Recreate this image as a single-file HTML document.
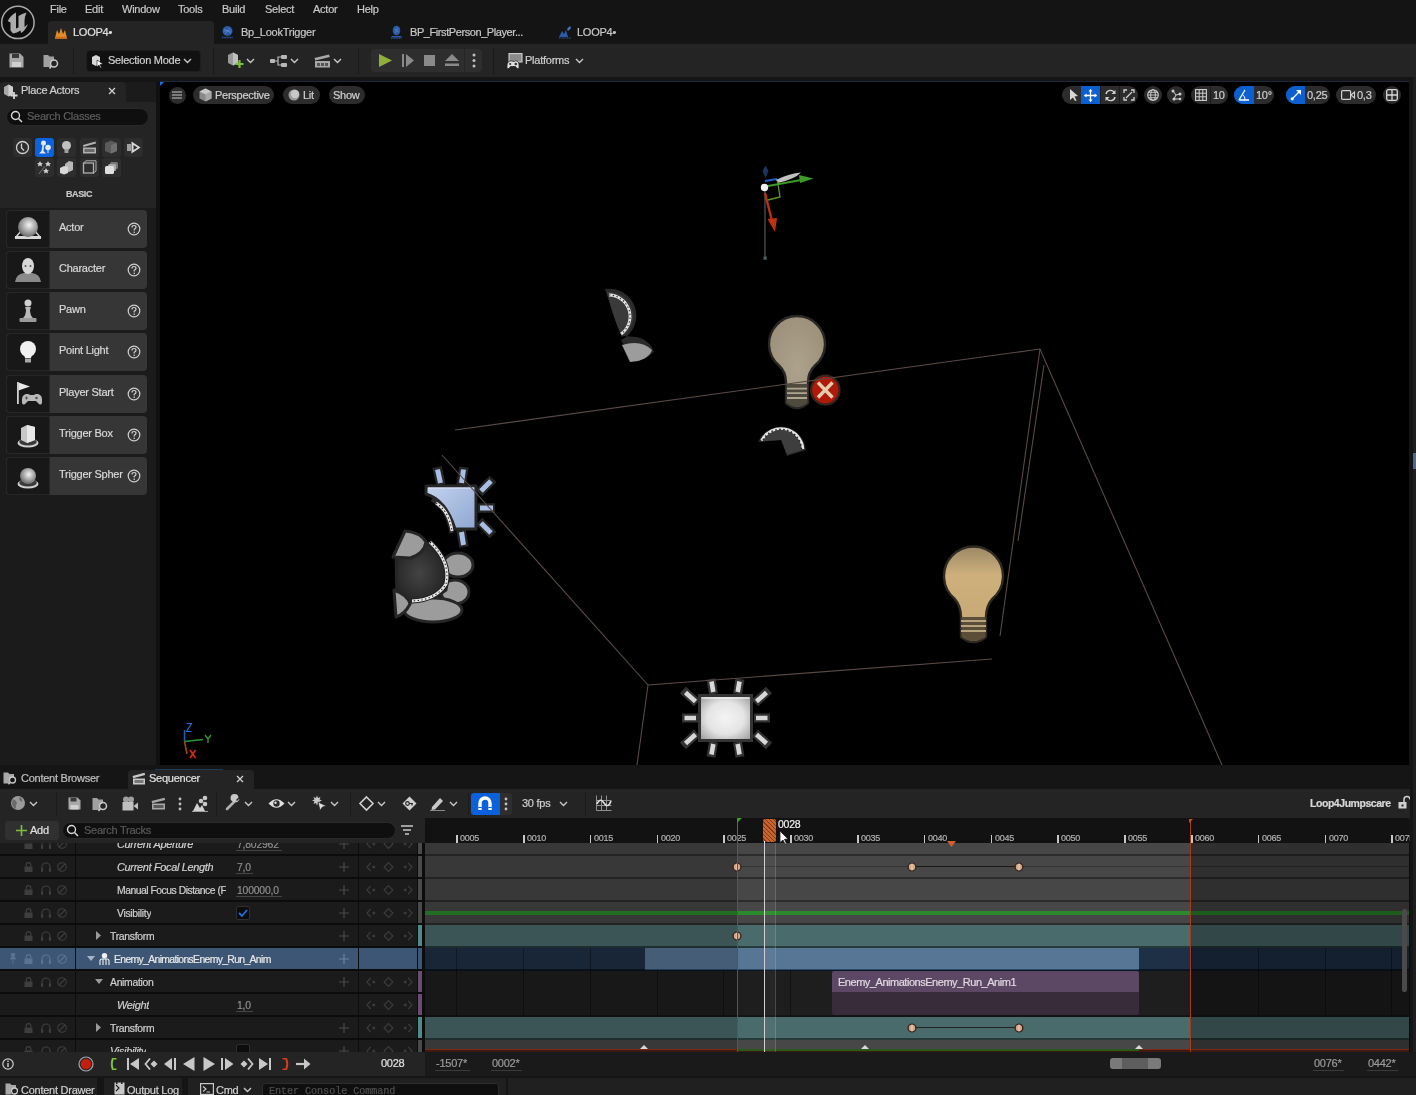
<!DOCTYPE html>
<html><head><meta charset="utf-8">
<style>
*{margin:0;padding:0;box-sizing:border-box}
html,body{width:1416px;height:1095px;overflow:hidden;background:#151515;font-family:"Liberation Sans",sans-serif;color:#c0c0c0;-webkit-font-smoothing:antialiased}
.t{will-change:transform;-webkit-text-stroke:0.2px currentColor}
.a{position:absolute}
.t{position:absolute;white-space:nowrap;font-size:11px;line-height:13px;letter-spacing:-0.25px}
svg{position:absolute;overflow:visible}
</style></head><body>

<!-- ============ MENU BAR ============ -->
<div class="a" style="left:0;top:0;width:1416px;height:44px;background:#141414"></div>
<svg style="left:0;top:0" width="40" height="44" viewBox="0 0 40 44">
 <circle cx="17.9" cy="22.4" r="16.2" fill="#0e0e0e" stroke="#a8a8a8" stroke-width="1.5"/>
 <path d="M7.7 21 Q11 15 16 12.6 V28.5 L18.5 27.5 V16 Q22 14 26.5 12.6 Q24.5 17 24.5 21 V27 L28 24 Q25 31 21 33 L20.5 30.5 Q17 33 13 33.4 L10.5 30.5 V22.5 Z" fill="#ababab"/>
</svg>
<div class="t" style="left:50px;top:3px;color:#c8c8c8">File</div>
<div class="t" style="left:85px;top:3px;color:#c8c8c8">Edit</div>
<div class="t" style="left:122px;top:3px;color:#c8c8c8">Window</div>
<div class="t" style="left:178px;top:3px;color:#c8c8c8">Tools</div>
<div class="t" style="left:222px;top:3px;color:#c8c8c8">Build</div>
<div class="t" style="left:265px;top:3px;color:#c8c8c8">Select</div>
<div class="t" style="left:313px;top:3px;color:#c8c8c8">Actor</div>
<div class="t" style="left:357px;top:3px;color:#c8c8c8">Help</div>

<!-- doc tabs -->
<div class="a" style="left:48px;top:21px;width:166px;height:23px;background:#242424;border-radius:4px 4px 0 0"></div>
<svg style="left:54px;top:26px" width="14" height="14" viewBox="0 0 14 14"><path d="M1 12 L3 4 L5 8 L7 2 L9 8 L11 4 L13 12Z" fill="#e08a2a"/><rect x="1" y="11" width="12" height="2" fill="#c86a1a"/></svg>
<div class="t" style="left:73px;top:26px;color:#e0e0e0">LOOP4•</div>
<svg style="left:221px;top:25px" width="13" height="14" viewBox="0 0 13 14"><circle cx="6.5" cy="6" r="5" fill="#2a5aa8"/><path d="M3 4 L10 8 M4 9 L9 3 M2.5 6 H10.5" stroke="#5a8ad0" stroke-width="0.8"/><path d="M1 12.5 H12" stroke="#2a5aa8" stroke-width="1.5" stroke-dasharray="1 0.6"/></svg>
<div class="t" style="left:241px;top:26px;color:#c8c8c8">Bp_LookTrigger</div>
<svg style="left:390px;top:25px" width="13" height="14" viewBox="0 0 13 14"><ellipse cx="6.5" cy="5.5" rx="3.8" ry="4.8" fill="#2a5aa8"/><path d="M4.5 4 L8.5 7 M5 8 L8 3" stroke="#5a8ad0" stroke-width="0.8"/><path d="M2 11 H11 L12 12.5 H1Z" fill="#2a5aa8"/><path d="M1 13.3 H12" stroke="#2a5aa8" stroke-width="1" stroke-dasharray="1 0.6"/></svg>
<div class="t" style="left:410px;top:26px;color:#c8c8c8;letter-spacing:-0.42px">BP_FirstPerson_Player...</div>
<svg style="left:558px;top:25px" width="14" height="14" viewBox="0 0 14 14"><path d="M1 12 L4 6 L6 9 L8 5 L10 12Z" fill="#2a5aa8"/><path d="M9 4 L12 1 L13 3 L10 6Z" fill="#4a7ac8"/><path d="M1 13 H13" stroke="#2a5aa8" stroke-width="1.2" stroke-dasharray="1 0.6"/></svg>
<div class="t" style="left:577px;top:26px;color:#c8c8c8">LOOP4•</div>

<!-- ============ TOOLBAR ============ -->
<div class="a" style="left:0;top:44px;width:1416px;height:33px;background:#242424"></div>

<!-- floppy -->
<svg style="left:9px;top:53px" width="15" height="15" viewBox="0 0 15 15"><path d="M0.5 0.5 H11 L14.5 4 V14.5 H0.5Z" fill="#a8a8a8"/><rect x="3" y="1" width="7" height="4" fill="#3a3a3a"/><rect x="3" y="9" width="9" height="5" fill="#d0d0d0"/></svg>
<!-- folder search -->
<svg style="left:43px;top:53px" width="18" height="17" viewBox="0 0 18 17"><path d="M0.5 2 H5 L6.5 3.5 H11 V7 A5 5 0 0 0 8 14 H0.5Z" fill="#a0a0a0"/><circle cx="11" cy="10.5" r="3.5" fill="none" stroke="#c8c8c8" stroke-width="1.5"/><path d="M8.5 13 L6.5 15.5" stroke="#c8c8c8" stroke-width="1.6"/></svg>
<div class="a" style="left:73px;top:48px;width:1px;height:26px;background:#1a1a1a"></div>
<!-- selection mode -->
<div class="a" style="left:86px;top:50px;width:115px;height:22px;background:#111111;border-radius:4px;border:1px solid #1e1e1e"></div>
<svg style="left:91px;top:54px" width="13" height="14" viewBox="0 0 13 14"><path d="M1 3 L5 1 L9 3 V10 L5 12 L1 10Z" fill="#d8d8d8"/><path d="M6 6 L12 10 L9 10.5 L10.5 13.5 L9.5 14 L8 11 L6 13Z" fill="#fff" stroke="#111" stroke-width="0.6"/></svg>
<div class="t" style="left:108px;top:54px;color:#d0d0d0">Selection Mode</div>
<svg style="left:183px;top:58px" width="9" height="6" viewBox="0 0 9 6"><path d="M1 1 L4.5 4.5 L8 1" fill="none" stroke="#c8c8c8" stroke-width="1.4"/></svg>
<div class="a" style="left:213px;top:48px;width:1px;height:26px;background:#1a1a1a"></div>
<!-- add actor -->
<svg style="left:227px;top:52px" width="18" height="17" viewBox="0 0 18 17"><path d="M1 3 L6 0.5 L11 3 V11 L6 13.5 L1 11Z" fill="#9a9a9a"/><path d="M6 0.5 L11 3 V11 L6 13.5Z" fill="#c0c0c0"/><path d="M12.5 8 V16 M8.5 12 H16.5" stroke="#7cc03a" stroke-width="2.2"/></svg>
<svg style="left:246px;top:58px" width="9" height="6" viewBox="0 0 9 6"><path d="M1 1 L4.5 4.5 L8 1" fill="none" stroke="#c8c8c8" stroke-width="1.4"/></svg>
<!-- blueprint -->
<svg style="left:270px;top:55px" width="19" height="12" viewBox="0 0 19 12"><rect x="0" y="4" width="5" height="4" rx="1" fill="#b8b8b8"/><rect x="11" y="0" width="6" height="4" rx="1" fill="#b8b8b8"/><rect x="11" y="8" width="6" height="4" rx="1" fill="#b8b8b8"/><path d="M5 6 H8 V2 H11 M8 6 V10 H11" fill="none" stroke="#b8b8b8" stroke-width="1.2"/></svg>
<svg style="left:290px;top:58px" width="9" height="6" viewBox="0 0 9 6"><path d="M1 1 L4.5 4.5 L8 1" fill="none" stroke="#c8c8c8" stroke-width="1.4"/></svg>
<!-- cinematics -->
<svg style="left:314px;top:53px" width="17" height="15" viewBox="0 0 17 15"><path d="M0.5 5 L15 1.5 L15.8 4 L1.3 7.5Z" fill="#a8a8a8"/><rect x="1" y="8" width="15" height="6.5" fill="#a8a8a8"/><rect x="3" y="10" width="3" height="3" fill="#555"/><rect x="7" y="10" width="3" height="3" fill="#555"/><rect x="11" y="10" width="3" height="3" fill="#555"/></svg>
<svg style="left:333px;top:58px" width="9" height="6" viewBox="0 0 9 6"><path d="M1 1 L4.5 4.5 L8 1" fill="none" stroke="#c8c8c8" stroke-width="1.4"/></svg>
<div class="a" style="left:358px;top:48px;width:1px;height:26px;background:#1a1a1a"></div>
<!-- play group -->
<div class="a" style="left:371px;top:49px;width:111px;height:23px;background:#2e2e2e;border-radius:4px"></div>
<div class="a" style="left:464px;top:49px;width:1px;height:23px;background:#252525"></div>
<svg style="left:378px;top:53px" width="15" height="15" viewBox="0 0 15 15"><path d="M1 1 L14 7.5 L1 14Z" fill="#8fb13c"/></svg>
<svg style="left:402px;top:54px" width="12" height="13" viewBox="0 0 12 13"><rect x="0" y="0" width="2" height="13" fill="#8a8a8a"/><path d="M4 0 L12 6.5 L4 13Z" fill="#8a8a8a"/></svg>
<div class="a" style="left:424px;top:55px;width:11px;height:11px;background:#8a8a8a"></div>
<svg style="left:445px;top:54px" width="14" height="13" viewBox="0 0 14 13"><path d="M7 0 L14 7 H0Z" fill="#8a8a8a"/><rect x="0" y="9.5" width="14" height="2.5" fill="#8a8a8a"/></svg>
<svg style="left:472px;top:53px" width="4" height="15" viewBox="0 0 4 15"><circle cx="2" cy="2" r="1.5" fill="#c0c0c0"/><circle cx="2" cy="7.5" r="1.5" fill="#c0c0c0"/><circle cx="2" cy="13" r="1.5" fill="#c0c0c0"/></svg>
<div class="a" style="left:493px;top:48px;width:1px;height:26px;background:#1a1a1a"></div>
<!-- platforms -->
<svg style="left:506px;top:53px" width="17" height="17" viewBox="0 0 17 17"><rect x="3" y="0.6" width="13" height="8.4" fill="#8a8a8a" stroke="#d0d0d0" stroke-width="1.1"/><path d="M1 14.5 Q0.5 9 4 8 Q6.5 7.5 7 8.5 H8.5 Q9 7.5 11 8 Q13.5 9 13 14.5 Q12.5 16.2 11 15.5 L9.5 13.5 H4.5 L3 15.5 Q1.5 16.2 1 14.5Z" fill="#e0e0e0" stroke="#242424" stroke-width="0.8"/><circle cx="4.2" cy="11" r="1.1" fill="#333"/><circle cx="9.8" cy="11" r="1.3" fill="#333"/></svg>
<div class="t" style="left:525px;top:54px;color:#d0d0d0">Platforms</div>
<svg style="left:575px;top:58px" width="9" height="6" viewBox="0 0 9 6"><path d="M1 1 L4.5 4.5 L8 1" fill="none" stroke="#c8c8c8" stroke-width="1.4"/></svg>


<!-- ============ LEFT PANEL ============ -->
<div class="a" style="left:0;top:82px;width:156px;height:683px;background:#1b1b1b"></div>
<div class="a" style="left:0;top:82px;width:126px;height:20px;background:#242424;border-radius:4px 4px 0 0"></div>
<svg style="left:3px;top:84px" width="15" height="16" viewBox="0 0 15 16"><path d="M1 3 L5.5 0.5 L10 3 V10 L5.5 12.5 L1 10Z" fill="#a8a8a8"/><path d="M5.5 0.5 L10 3 V10 L5.5 12.5Z" fill="#d0d0d0"/><path d="M11 8 V15 M7.5 11.5 H14.5" stroke="#d8d8d8" stroke-width="1.8"/></svg>
<div class="t" style="left:21px;top:84px;color:#d0d0d0">Place Actors</div>
<svg style="left:108px;top:87px" width="8" height="8" viewBox="0 0 8 8"><path d="M1 1 L7 7 M7 1 L1 7" stroke="#d0d0d0" stroke-width="1.3"/></svg>
<div class="a" style="left:0;top:102px;width:156px;height:106px;background:#242424"></div>
<div class="a" style="left:6px;top:108px;width:143px;height:18px;background:#0f0f0f;border-radius:9px;border:1px solid #2a2a2a"></div>
<svg style="left:10px;top:110px" width="13" height="13" viewBox="0 0 13 13"><circle cx="5.5" cy="5.5" r="4" fill="none" stroke="#d8d8d8" stroke-width="1.4"/><path d="M8.5 8.5 L12 12" stroke="#d8d8d8" stroke-width="1.5"/></svg>
<div class="t" style="left:27px;top:110px;color:#5e5e5e">Search Classes</div>
<div class="a" style="left:13px;top:138px;width:19px;height:19px;background:#2d2d2d;border-radius:3px"></div>
<div class="a" style="left:35px;top:138px;width:19px;height:19px;background:#0b62dc;border-radius:3px"></div>
<div class="a" style="left:57px;top:138px;width:19px;height:19px;background:#2d2d2d;border-radius:3px"></div>
<div class="a" style="left:80px;top:138px;width:19px;height:19px;background:#2d2d2d;border-radius:3px"></div>
<div class="a" style="left:102px;top:138px;width:19px;height:19px;background:#2d2d2d;border-radius:3px"></div>
<div class="a" style="left:124px;top:138px;width:19px;height:19px;background:#2d2d2d;border-radius:3px"></div>
<div class="a" style="left:35px;top:158px;width:19px;height:19px;background:#2d2d2d;border-radius:3px"></div>
<div class="a" style="left:57px;top:158px;width:19px;height:19px;background:#2d2d2d;border-radius:3px"></div>
<div class="a" style="left:80px;top:158px;width:19px;height:19px;background:#2d2d2d;border-radius:3px"></div>
<div class="a" style="left:102px;top:158px;width:19px;height:19px;background:#2d2d2d;border-radius:3px"></div>

<svg style="left:15px;top:140px" width="15" height="15" viewBox="0 0 15 15"><circle cx="7.5" cy="7.5" r="6" fill="none" stroke="#d0d0d0" stroke-width="1.3"/><path d="M6.5 3.5 V8 L9 10.5" fill="none" stroke="#d0d0d0" stroke-width="1.3"/></svg>
<svg style="left:37px;top:140px" width="15" height="15" viewBox="0 0 15 15"><circle cx="6.5" cy="3" r="2.5" fill="#e8e8e8"/><path d="M5.5 5 L4.5 11 L2 13.5 H9 L6.5 11 L7 5Z" fill="#e8e8e8"/><circle cx="11" cy="7.5" r="2.8" fill="#e8e8e8"/><rect x="10.5" y="10" width="1" height="3" fill="#e8e8e8"/></svg>
<svg style="left:60px;top:140px" width="13" height="15" viewBox="0 0 13 15"><circle cx="6.5" cy="5.5" r="4.5" fill="#c0c0c0"/><rect x="4.5" y="9" width="4" height="4" fill="#a0a0a0"/></svg>
<svg style="left:82px;top:141px" width="15" height="13" viewBox="0 0 15 13"><path d="M1 4 L13.5 0.5 L14 2.5 L1.5 6Z" fill="#b0b0b0"/><rect x="1" y="6.5" width="13" height="6" fill="#b0b0b0"/><rect x="2.5" y="8" width="10" height="3" fill="#6a6a6a"/></svg>
<svg style="left:104px;top:140px" width="14" height="14" viewBox="0 0 14 14"><path d="M1 3 L7 0.5 L13 3 V11 L7 13.5 L1 11Z" fill="#5a5a5a"/><path d="M7 5 L13 3 V11 L7 13.5Z" fill="#707070"/></svg>
<svg style="left:127px;top:141px" width="14" height="13" viewBox="0 0 14 13"><rect x="0" y="3" width="4" height="7" fill="#a0a0a0"/><path d="M4.5 0.5 L13.5 6.5 L4.5 12.5Z" fill="#d8d8d8"/><path d="M6.5 4 L10.5 6.5 L6.5 9Z" fill="#2d2d2d"/></svg>
<svg style="left:37px;top:160px" width="15" height="15" viewBox="0 0 15 15"><path d="M3 1 L4 3 L6 3.2 L4.5 4.5 L5 6.5 L3 5.5 L1 6.5 L1.5 4.5 L0 3.2 L2 3Z M11 1 L12 3 L14 3.2 L12.5 4.5 L13 6.5 L11 5.5 L9 6.5 L9.5 4.5 L8 3.2 L10 3Z M9 8 L10 10 L12 10.2 L10.5 11.5 L11 13.5 L9 12.5 L7 13.5 L7.5 11.5 L6 10.2 L8 10Z" fill="#d0d0d0"/><path d="M2 14 L8 6" stroke="#888" stroke-width="0.8"/></svg>
<svg style="left:59px;top:160px" width="15" height="15" viewBox="0 0 15 15"><path d="M6 4 L10 1 L14 2 V10 L10 12 L6 11Z" fill="#b8b8b8"/><path d="M1 8 L5 6 L9 7 V13 L5 14.5 L1 13Z" fill="#d8d8d8"/></svg>
<svg style="left:82px;top:160px" width="15" height="15" viewBox="0 0 15 15"><rect x="1.5" y="3" width="10" height="10" fill="none" stroke="#b0b0b0" stroke-width="1.3"/><path d="M1.5 3 L4 0.8 H14 V11 L11.5 13" fill="none" stroke="#b0b0b0" stroke-width="1"/></svg>
<svg style="left:104px;top:160px" width="15" height="15" viewBox="0 0 15 15"><rect x="6" y="2" width="8" height="7" rx="1.5" fill="#777"/><rect x="4" y="4" width="8" height="7" rx="1.5" fill="#aaa"/><rect x="1" y="6" width="9" height="8" rx="1.5" fill="#e0e0e0"/></svg>
<div class="t" style="left:66px;top:188px;font-size:9px;font-weight:bold;color:#c8c8c8;letter-spacing:-0.4px">BASIC</div>
<div class="a" style="left:6px;top:210px;width:141px;height:38px;background:#363636;border-radius:4px;overflow:hidden"><div class="a" style="left:0;top:0;width:44px;height:38px;background:#181818;border:1px solid #262626;border-radius:4px 0 0 4px"></div></div>
<svg style="left:12px;top:217px" width="32" height="26" viewBox="0 0 32 26"><defs><radialGradient id="gs" cx="0.55" cy="0.4" r="0.6"><stop offset="0" stop-color="#f4f4f4"/><stop offset="1" stop-color="#6a6a6a"/></radialGradient></defs><path d="M4 20 L9 14 H23 L28 20Z" fill="none" stroke="#cfcfcf" stroke-width="1.5"/><rect x="3" y="19" width="26" height="3" fill="#d8d8d8"/><circle cx="16" cy="10" r="10" fill="url(#gs)"/></svg>
<div class="t" style="left:59px;top:221px;color:#d8d8d8">Actor</div>
<svg style="left:127px;top:222px" width="14" height="14" viewBox="0 0 14 14"><circle cx="7" cy="7" r="5.8" fill="none" stroke="#d0d0d0" stroke-width="1.2"/><path d="M5 5.5 Q5 3.5 7 3.5 Q9 3.5 9 5.3 Q9 6.5 7.2 7.3 V8.5" fill="none" stroke="#d0d0d0" stroke-width="1.2"/><circle cx="7.2" cy="10.3" r="0.8" fill="#d0d0d0"/></svg>
<div class="a" style="left:6px;top:251px;width:141px;height:38px;background:#363636;border-radius:4px;overflow:hidden"><div class="a" style="left:0;top:0;width:44px;height:38px;background:#181818;border:1px solid #262626;border-radius:4px 0 0 4px"></div></div>
<svg style="left:12px;top:258px" width="32" height="26" viewBox="0 0 32 26"><path d="M3 24 Q4 16 12 15 H20 Q28 16 29 24Z" fill="#8a8a8a"/><ellipse cx="16" cy="8" rx="6" ry="8" fill="#d8d8d8"/><circle cx="13.5" cy="8" r="1" fill="#555"/><circle cx="18.5" cy="8" r="1" fill="#555"/></svg>
<div class="t" style="left:59px;top:262px;color:#d8d8d8">Character</div>
<svg style="left:127px;top:263px" width="14" height="14" viewBox="0 0 14 14"><circle cx="7" cy="7" r="5.8" fill="none" stroke="#d0d0d0" stroke-width="1.2"/><path d="M5 5.5 Q5 3.5 7 3.5 Q9 3.5 9 5.3 Q9 6.5 7.2 7.3 V8.5" fill="none" stroke="#d0d0d0" stroke-width="1.2"/><circle cx="7.2" cy="10.3" r="0.8" fill="#d0d0d0"/></svg>
<div class="a" style="left:6px;top:292px;width:141px;height:38px;background:#363636;border-radius:4px;overflow:hidden"><div class="a" style="left:0;top:0;width:44px;height:38px;background:#181818;border:1px solid #262626;border-radius:4px 0 0 4px"></div></div>
<svg style="left:12px;top:299px" width="32" height="26" viewBox="0 0 32 26"><circle cx="16" cy="4" r="3.5" fill="#d0d0d0"/><path d="M13 8 H19 L18 11 Q18 16 21 19 H11 Q14 16 14 11Z" fill="#b8b8b8"/><rect x="7.5" y="19" width="17" height="4" rx="1" fill="#9a9a9a"/></svg>
<div class="t" style="left:59px;top:303px;color:#d8d8d8">Pawn</div>
<svg style="left:127px;top:304px" width="14" height="14" viewBox="0 0 14 14"><circle cx="7" cy="7" r="5.8" fill="none" stroke="#d0d0d0" stroke-width="1.2"/><path d="M5 5.5 Q5 3.5 7 3.5 Q9 3.5 9 5.3 Q9 6.5 7.2 7.3 V8.5" fill="none" stroke="#d0d0d0" stroke-width="1.2"/><circle cx="7.2" cy="10.3" r="0.8" fill="#d0d0d0"/></svg>
<div class="a" style="left:6px;top:333px;width:141px;height:38px;background:#363636;border-radius:4px;overflow:hidden"><div class="a" style="left:0;top:0;width:44px;height:38px;background:#181818;border:1px solid #262626;border-radius:4px 0 0 4px"></div></div>
<svg style="left:12px;top:340px" width="32" height="26" viewBox="0 0 32 26"><circle cx="16" cy="9" r="8" fill="#f0f0f0"/><path d="M12 14 H20 L19 18 H13Z" fill="#f0f0f0"/><rect x="13" y="18.5" width="6" height="4" fill="#a8a8a8"/></svg>
<div class="t" style="left:59px;top:344px;color:#d8d8d8">Point Light</div>
<svg style="left:127px;top:345px" width="14" height="14" viewBox="0 0 14 14"><circle cx="7" cy="7" r="5.8" fill="none" stroke="#d0d0d0" stroke-width="1.2"/><path d="M5 5.5 Q5 3.5 7 3.5 Q9 3.5 9 5.3 Q9 6.5 7.2 7.3 V8.5" fill="none" stroke="#d0d0d0" stroke-width="1.2"/><circle cx="7.2" cy="10.3" r="0.8" fill="#d0d0d0"/></svg>
<div class="a" style="left:6px;top:375px;width:141px;height:38px;background:#363636;border-radius:4px;overflow:hidden"><div class="a" style="left:0;top:0;width:44px;height:38px;background:#181818;border:1px solid #262626;border-radius:4px 0 0 4px"></div></div>
<svg style="left:12px;top:382px" width="32" height="26" viewBox="0 0 32 26"><rect x="5" y="0" width="1.8" height="22" fill="#d0d0d0"/><path d="M6.5 0.5 L18 4.5 L6.5 8.5Z" fill="#e8e8e8"/><path d="M10 21 Q9 13 14 12 Q17 11.5 18 13 H22 Q23 11.5 26 12 Q31 13 30 21 Q29 23.5 27 22 L24 19 H16 L13 22 Q11 23.5 10 21Z" fill="#b8b8b8"/><path d="M13 16 H16 M14.5 14.5 V17.5" stroke="#555" stroke-width="1"/><circle cx="24.5" cy="16" r="1.3" fill="#555"/></svg>
<div class="t" style="left:59px;top:386px;color:#d8d8d8">Player Start</div>
<svg style="left:127px;top:387px" width="14" height="14" viewBox="0 0 14 14"><circle cx="7" cy="7" r="5.8" fill="none" stroke="#d0d0d0" stroke-width="1.2"/><path d="M5 5.5 Q5 3.5 7 3.5 Q9 3.5 9 5.3 Q9 6.5 7.2 7.3 V8.5" fill="none" stroke="#d0d0d0" stroke-width="1.2"/><circle cx="7.2" cy="10.3" r="0.8" fill="#d0d0d0"/></svg>
<div class="a" style="left:6px;top:416px;width:141px;height:38px;background:#363636;border-radius:4px;overflow:hidden"><div class="a" style="left:0;top:0;width:44px;height:38px;background:#181818;border:1px solid #262626;border-radius:4px 0 0 4px"></div></div>
<svg style="left:12px;top:423px" width="32" height="26" viewBox="0 0 32 26"><ellipse cx="16" cy="20" rx="10.5" ry="4.5" fill="#d0d0d0"/><ellipse cx="16" cy="19" rx="8.8" ry="3.4" fill="#3a3a3a"/><path d="M9 5 L15 2 L23 4 V17 L15 20 L9 17Z" fill="#c8c8c8"/><path d="M15 2 L23 4 V17 L15 20Z" fill="#e8e8e8"/></svg>
<div class="t" style="left:59px;top:427px;color:#d8d8d8">Trigger Box</div>
<svg style="left:127px;top:428px" width="14" height="14" viewBox="0 0 14 14"><circle cx="7" cy="7" r="5.8" fill="none" stroke="#d0d0d0" stroke-width="1.2"/><path d="M5 5.5 Q5 3.5 7 3.5 Q9 3.5 9 5.3 Q9 6.5 7.2 7.3 V8.5" fill="none" stroke="#d0d0d0" stroke-width="1.2"/><circle cx="7.2" cy="10.3" r="0.8" fill="#d0d0d0"/></svg>
<div class="a" style="left:6px;top:457px;width:141px;height:38px;background:#363636;border-radius:4px;overflow:hidden"><div class="a" style="left:0;top:0;width:44px;height:38px;background:#181818;border:1px solid #262626;border-radius:4px 0 0 4px"></div></div>
<svg style="left:12px;top:464px" width="32" height="26" viewBox="0 0 32 26"><ellipse cx="16" cy="20" rx="10.5" ry="4.5" fill="#d0d0d0"/><ellipse cx="16" cy="19" rx="8.8" ry="3.4" fill="#3a3a3a"/><circle cx="16" cy="12" r="8" fill="url(#gs)"/></svg>
<div class="t" style="left:59px;top:468px;color:#d8d8d8">Trigger Spher</div>
<svg style="left:127px;top:469px" width="14" height="14" viewBox="0 0 14 14"><circle cx="7" cy="7" r="5.8" fill="none" stroke="#d0d0d0" stroke-width="1.2"/><path d="M5 5.5 Q5 3.5 7 3.5 Q9 3.5 9 5.3 Q9 6.5 7.2 7.3 V8.5" fill="none" stroke="#d0d0d0" stroke-width="1.2"/><circle cx="7.2" cy="10.3" r="0.8" fill="#d0d0d0"/></svg>
<div class="a" style="left:156px;top:82px;width:4px;height:683px;background:#111"></div>


<!-- ============ VIEWPORT ============ -->
<div class="a" style="left:160px;top:82px;width:1249px;height:683px;background:#000"></div>
<div class="a" style="left:1409px;top:77px;width:4px;height:975px;background:#151515"></div><div class="a" style="left:1413px;top:77px;width:3px;height:975px;background:#1e1e1e"></div>
<div class="a" style="left:1413px;top:453px;width:3px;height:16px;background:#4a6a90"></div>
<svg style="left:160px;top:82px" width="4" height="4" viewBox="0 0 4 4"><path d="M0 4 L0 0 L4 0Z" fill="#1a70e8"/></svg>
<!-- left viewport toolbar -->
<div class="a" style="left:168.5px;top:86.5px;width:17px;height:17px;border-radius:50%;background:#2c2c2c"></div>
<svg style="left:172px;top:91px" width="10" height="8" viewBox="0 0 10 8"><path d="M0 1 H10 M0 4 H10 M0 7 H10" stroke="#c8c8c8" stroke-width="1.2"/></svg>
<div class="a" style="left:193px;top:86px;width:81px;height:18px;border-radius:9px;background:#2c2c2c"></div>
<svg style="left:199px;top:88px" width="13" height="14" viewBox="0 0 13 14"><path d="M6.5 0.5 L12.5 3.5 V10.5 L6.5 13.5 L0.5 10.5 V3.5Z" fill="#8a8a8a"/><path d="M0.5 3.5 L6.5 6.5 L12.5 3.5 L6.5 0.5Z" fill="#c8c8c8"/><path d="M6.5 6.5 L12.5 3.5 V10.5 L6.5 13.5Z" fill="#a8a8a8"/></svg>
<div class="t" style="left:215px;top:89px;color:#d0d0d0">Perspective</div>
<div class="a" style="left:283px;top:86px;width:37px;height:18px;border-radius:9px;background:#2c2c2c"></div>
<svg style="left:288px;top:89px" width="12" height="12" viewBox="0 0 12 12"><circle cx="6" cy="6" r="5.5" fill="#9a9a9a"/><circle cx="7" cy="5" r="4.2" fill="#c8c8c8"/></svg>
<div class="t" style="left:303px;top:89px;color:#d0d0d0">Lit</div>
<div class="a" style="left:329px;top:86px;width:36px;height:18px;border-radius:9px;background:#2c2c2c"></div>
<div class="t" style="left:333px;top:89px;color:#d0d0d0">Show</div>

<!-- right viewport toolbar -->
<div class="a" style="left:1062px;top:86px;width:76px;height:18px;border-radius:9px;background:#2c2c2c;overflow:hidden">
  <div class="a" style="left:19px;top:0;width:19px;height:18px;background:#0b5fd0"></div>
  <div class="a" style="left:38px;top:0;width:1px;height:18px;background:#1c1c1c"></div>
  <div class="a" style="left:57px;top:0;width:1px;height:18px;background:#1c1c1c"></div>
</div>
<svg style="left:1068px;top:88px" width="12" height="14" viewBox="0 0 12 14"><path d="M2 1 L10 8 L6.5 8.5 L8.5 12.5 L7 13 L5 9.5 L2 12Z" fill="#d8d8d8"/></svg>
<svg style="left:1084px;top:89px" width="13" height="13" viewBox="0 0 13 13"><path d="M6.5 0.5 V12.5 M0.5 6.5 H12.5" stroke="#fff" stroke-width="1.3"/><path d="M6.5 0 L8.5 2.5 H4.5Z M6.5 13 L8.5 10.5 H4.5Z M0 6.5 L2.5 4.5 V8.5Z M13 6.5 L10.5 4.5 V8.5Z" fill="#fff"/></svg>
<svg style="left:1104px;top:89px" width="13" height="13" viewBox="0 0 13 13"><path d="M2 5 A4.5 4.5 0 0 1 10.5 4 M11 8 A4.5 4.5 0 0 1 2.5 9" fill="none" stroke="#d0d0d0" stroke-width="1.4"/><path d="M11.5 1 V5 H7.5Z M1.5 12 V8 H5.5Z" fill="#d0d0d0"/></svg>
<svg style="left:1123px;top:89px" width="12" height="12" viewBox="0 0 12 12"><path d="M1 4 V1 H4 M8 1 H11 V4 M11 8 V11 H8 M4 11 H1 V8" fill="none" stroke="#d0d0d0" stroke-width="1.3"/><path d="M3 9 L9 3" stroke="#d0d0d0" stroke-width="1.3"/></svg>
<div class="a" style="left:1144px;top:86px;width:18px;height:18px;border-radius:50%;background:#2c2c2c"></div>
<svg style="left:1147px;top:89px" width="12" height="12" viewBox="0 0 12 12"><circle cx="6" cy="6" r="5.3" fill="none" stroke="#d0d0d0" stroke-width="1.1"/><ellipse cx="6" cy="6" rx="2.3" ry="5.3" fill="none" stroke="#d0d0d0" stroke-width="1"/><path d="M0.7 6 H11.3 M1.5 3.3 H10.5 M1.5 8.7 H10.5" stroke="#d0d0d0" stroke-width="0.9"/></svg>
<div class="a" style="left:1167px;top:86px;width:18px;height:18px;border-radius:50%;background:#2c2c2c"></div>
<svg style="left:1170px;top:89px" width="12" height="12" viewBox="0 0 12 12"><path d="M3 2 L6 6 L10 5 M6 6 L4 10 L10 10" fill="none" stroke="#d0d0d0" stroke-width="1"/><circle cx="3" cy="2" r="1.5" fill="#d0d0d0"/><circle cx="10" cy="5" r="1.5" fill="#d0d0d0"/><circle cx="4" cy="10" r="1.5" fill="#d0d0d0"/><circle cx="10" cy="10" r="1.3" fill="#d0d0d0"/></svg>
<div class="a" style="left:1191px;top:86px;width:37px;height:18px;border-radius:9px;background:#2c2c2c"><div class="a" style="left:19px;top:0;width:1px;height:18px;background:#1c1c1c"></div></div>
<svg style="left:1195px;top:89px" width="12" height="12" viewBox="0 0 12 12"><rect x="0.6" y="0.6" width="10.8" height="10.8" fill="none" stroke="#d0d0d0" stroke-width="1.1"/><path d="M4.2 0.6 V11.4 M7.8 0.6 V11.4 M0.6 4.2 H11.4 M0.6 7.8 H11.4" stroke="#d0d0d0" stroke-width="1"/></svg>
<div class="t" style="left:1213px;top:89px;color:#d0d0d0">10</div>
<div class="a" style="left:1234px;top:86px;width:40px;height:18px;border-radius:9px;background:#2c2c2c;overflow:hidden"><div class="a" style="left:0;top:0;width:20px;height:18px;background:#0b5fd0"></div></div>
<svg style="left:1238px;top:89px" width="12" height="12" viewBox="0 0 12 12"><path d="M1 11 H11 M1 11 L7 1" stroke="#fff" stroke-width="1.3" fill="none"/><path d="M4.5 5.5 A6 6 0 0 1 7 11" stroke="#fff" stroke-width="1" fill="none"/></svg>
<div class="t" style="left:1256px;top:89px;color:#d0d0d0">10°</div>
<div class="a" style="left:1286px;top:86px;width:44px;height:18px;border-radius:9px;background:#2c2c2c;overflow:hidden"><div class="a" style="left:0;top:0;width:19px;height:18px;background:#0b5fd0"></div></div>
<svg style="left:1290px;top:89px" width="12" height="12" viewBox="0 0 12 12"><path d="M2 10 L10 2" stroke="#fff" stroke-width="1.3"/><path d="M11 1 V6 L6 1Z" fill="#fff"/><circle cx="2.2" cy="9.8" r="1.6" fill="#fff"/></svg>
<div class="t" style="left:1307px;top:89px;color:#d0d0d0">0,25</div>
<div class="a" style="left:1336px;top:86px;width:40px;height:18px;border-radius:9px;background:#2c2c2c"></div>
<svg style="left:1341px;top:90px" width="14" height="10" viewBox="0 0 14 10"><rect x="0.6" y="0.6" width="9" height="8.8" rx="1" fill="none" stroke="#d0d0d0" stroke-width="1.2"/><path d="M10 5 L13.5 2 V8Z" fill="none" stroke="#d0d0d0" stroke-width="1.1"/></svg>
<div class="t" style="left:1357px;top:89px;color:#d0d0d0">0,3</div>
<div class="a" style="left:1383px;top:86px;width:18px;height:18px;border-radius:50%;background:#2c2c2c"></div>
<svg style="left:1386px;top:89px" width="12" height="12" viewBox="0 0 12 12"><rect x="0.7" y="0.7" width="10.6" height="10.6" rx="1.5" fill="none" stroke="#d8d8d8" stroke-width="1.3"/><path d="M6 0.7 V11.3 M0.7 6 H11.3" stroke="#d8d8d8" stroke-width="1.3"/></svg>


<div class="a" style="left:160px;top:81px;width:1249px;height:1px;background:#1a2a3c"></div>
<!-- ============ SCENE ============ -->
<svg style="left:0;top:0" width="1416" height="1095" viewBox="0 0 1416 1095">
<defs>
 <radialGradient id="bulb1" cx="0.5" cy="0.55" r="0.65"><stop offset="0" stop-color="#ada28c"/><stop offset="1" stop-color="#9a8e78"/></radialGradient>
 <linearGradient id="bulb2" x1="0" y1="0" x2="0" y2="1"><stop offset="0" stop-color="#9c8866"/><stop offset="0.3" stop-color="#cdb07c"/><stop offset="1" stop-color="#c4a674"/></linearGradient>
 <radialGradient id="rect" cx="0.5" cy="0.5" r="0.65"><stop offset="0" stop-color="#f4f4f4"/><stop offset="0.55" stop-color="#e4e4e4"/><stop offset="1" stop-color="#a0a0a0"/></radialGradient>
 <linearGradient id="dirl" x1="0" y1="0" x2="1" y2="1"><stop offset="0" stop-color="#c4d4f0"/><stop offset="1" stop-color="#8ea6d0"/></linearGradient>
 <radialGradient id="spotd" cx="0.45" cy="0.5" r="0.6"><stop offset="0" stop-color="#444"/><stop offset="1" stop-color="#202020"/></radialGradient>
</defs>

<!-- gizmo -->
<g>
 <path d="M765 190 V258" stroke="#3d5050" stroke-width="1.4"/>
 <rect x="763.5" y="256.5" width="3.2" height="3.2" fill="#4a6464"/>
 <path d="M765.5 165.5 L768.5 171 L765.5 178 L762.5 171Z" fill="#1a3560"/>
 <path d="M765 181 L777 179" stroke="#2060c8" stroke-width="2.2"/>
 <path d="M776 180 Q790 173 801 172.5 Q795 179 778 183Z" fill="#c0c0c0"/>
 <path d="M768 186 L801 180" stroke="#3a9a2a" stroke-width="1.8"/>
 <path d="M799 175 L813.5 178.5 L800 183Z" fill="#3f9a2a"/>
 <path d="M777.5 181 L780 197 L768 200" fill="none" stroke="#5a9a2a" stroke-width="1.3"/>
 <path d="M765 193 L772 221" stroke="#c03010" stroke-width="2.3"/>
 <path d="M767.5 219 L775 232 L777 218Z" fill="#c03010"/>
 <circle cx="764.5" cy="187.5" r="3.7" fill="#f0f0f0"/>
</g>
<!-- spot 1 (upper) -->
<g>
 <path d="M605 289 A27 27 0 0 1 621 340 L631 358 Q640 364 654 352 Q650 340 637 337 L624 336 Q614 318 605 289Z" fill="#2a2a2a"/>
 <path d="M607 292 A24.5 24.5 0 0 1 622 337 Q613 318 607 292Z" fill="#3a3a3a"/>
 <path d="M609 295 A21.5 21.5 0 0 1 621 334" fill="none" stroke="#e8e8e8" stroke-width="2.8"/><path d="M609 295 A21.5 21.5 0 0 1 621 334" fill="none" stroke="#262626" stroke-width="1.1" stroke-dasharray="1.4 2.4"/>
 <path d="M622 345 Q641 339 652 350 Q648 361 630 362 Z" fill="#9c9c9c"/>
</g>
<!-- bulb 1 -->
<g>
 <path d="M786 383 Q786 372 779 365.5 A28 28 0 1 1 815 365.5 Q808 372 808 383 V403 Q797 413 786 403 Z" fill="url(#bulb1)" stroke="#2a2824" stroke-width="2.4"/>
 <path d="M786.5 384 H807.5 V403 Q797 411 786.5 403Z" fill="#4e4a3e"/>
 <path d="M787 388.7 H807 M787 393.2 H807 M787 398 H807" stroke="#b0a690" stroke-width="1.8"/>
 <circle cx="825.3" cy="390" r="15.4" fill="#3a2420"/>
 <circle cx="825.3" cy="390" r="13.2" fill="#b01a0a"/>
 <path d="M818 382.5 L832.5 397.5 M832.5 382.5 L818 397.5" stroke="#e2ceac" stroke-width="3.4"/>
</g>
<!-- spot small -->
<g>
 <path d="M758 442 A25 25 0 0 1 806 450 L787 456 L781 440 Z" fill="#262626"/>
 <path d="M760 441.5 A23.5 23.5 0 0 1 804.5 449.5 L787 454.5 L781.3 439.9 Z" fill="#3e3e3e"/>
 <path d="M761.5 440.5 A22 22 0 0 1 803 449" fill="none" stroke="#e8e8e8" stroke-width="2.6"/>
 <path d="M763 440 A20.5 20.5 0 0 1 801.5 449" fill="none" stroke="#262626" stroke-width="1.4" stroke-dasharray="1.6 2.4"/>
</g>
<!-- directional light (blue) -->
<g stroke-linecap="butt">
 <path d="M437 467 L441 485 M464 467 L461 485 M479 493 L493 479 M478 508 H495 M479 521 L493 535 M461 530 L464 547" stroke="#262626" stroke-width="9.5"/>
 <path d="M437.5 469.5 L440.5 483 M463.5 469.5 L461.5 483 M481 491 L491 481 M480 508 H493 M481 523 L491 533 M461.5 532 L463.5 545" stroke="#a8bee4" stroke-width="5"/>
</g>
<path d="M426 486 H476 V529 H455 Q446 500 426 494Z" fill="url(#dirl)" stroke="#262626" stroke-width="3" stroke-linejoin="round"/>
<path d="M428 488 H474" stroke="#dfe8f8" stroke-width="1.2"/>
<path d="M432 499 Q448 508 452 533" fill="none" stroke="#2a2a2a" stroke-width="5"/>
<path d="M436 503 Q449 511 452 531" fill="none" stroke="#e8e8e8" stroke-width="2.8"/><path d="M436 503 Q449 511 452 531" fill="none" stroke="#262626" stroke-width="1.1" stroke-dasharray="1.4 2.4"/>
<!-- big spotlight -->
<g stroke="#262626" stroke-width="3" stroke-linejoin="round">
 <ellipse cx="458" cy="565" rx="15" ry="12" fill="#9c9c9c"/>
 <ellipse cx="455" cy="592" rx="14" ry="12" fill="#9c9c9c"/>
 <path d="M396 552 Q420 545 430 543 Q452 565 446 590 Q430 603 410 603 L397 602Z" fill="url(#spotd)"/>
 <path d="M393 557 L405 531 Q420 532 426 542 Q424 554 410 558 Z" fill="#9c9c9c"/>
 <ellipse cx="433" cy="610" rx="29" ry="12" fill="#9c9c9c"/>
 <path d="M394 590 Q408 595 410 604 Q405 614 396 617Z" fill="#9c9c9c"/>
</g>
<path d="M430 542 Q451 562 446 584 Q436 600 412 601" fill="none" stroke="#222" stroke-width="5"/>
<path d="M430 542 Q451 562 446 584 Q436 600 412 601" fill="none" stroke="#e8e8e8" stroke-width="3.0"/><path d="M430 542 Q451 562 446 584 Q436 600 412 601" fill="none" stroke="#262626" stroke-width="1.1" stroke-dasharray="1.4 2.4"/>
<!-- rect light (white) -->
<g stroke-linecap="butt">
 <g stroke="#333" stroke-width="9">
  <path d="M711 679 L713.5 694 M740 679 L737.5 694 M683 690 L697 703 M682 718 H698 M683 746 L697 733 M711 757 L713.5 742 M740 757 L737.5 742 M769 690 L755 703 M770 718 H754 M769 746 L755 733"/>
 </g>
 <g stroke="#d8d8d8" stroke-width="4.6">
  <path d="M711.5 681.5 L713.3 692 M739.5 681.5 L737.7 692 M685.5 692.5 L695.5 701.5 M684.5 718 H696 M685.5 743.5 L695.5 734.5 M711.5 754.5 L713.3 744 M739.5 754.5 L737.7 744 M766.5 692.5 L756.5 701.5 M767.5 718 H756 M766.5 743.5 L756.5 734.5"/>
 </g>
</g>
<rect x="699.5" y="695.5" width="52" height="45" fill="url(#rect)" stroke="#333" stroke-width="3"/>
<path d="M701.5 698 H749.5" stroke="#fff" stroke-width="1.2"/>
<!-- bulb 2 -->
<g>
 <path d="M961 617 Q961 606 954.5 598.6 A29.5 29.5 0 1 1 992.5 598.6 Q986 606 986 617 V637 Q973.5 647 961 637 Z" fill="url(#bulb2)" stroke="#2e2a22" stroke-width="2.4"/>
 <path d="M961.5 617 H985.5 V637 Q973.5 645 961.5 637Z" fill="#5a4e38"/>
 <path d="M961 621 H986 M961 626 H986 M961 631 H986" stroke="#b8a47c" stroke-width="2"/>
</g>
<g stroke="#5a4a46" stroke-width="1.1" fill="none">
 <path d="M455 430 L1040 349 L1222 765"/>
 <path d="M1040 349 L1000 636"/>
 <path d="M1044 365 L1018 541"/>
 <path d="M992 659 L648 685 L637 765"/>
 <path d="M442 455 L648 685"/>
</g>
<!-- axis gizmo -->
<g stroke-width="1.5" fill="none">
 <path d="M184.5 741.5 V730" stroke="#1f5fb0"/>
 <path d="M184.5 741.5 L203 739.5" stroke="#2a9a2a"/>
 <path d="M184.5 741.5 L187 754" stroke="#a04a10"/>
 <path d="M186.5 723.5 H191.5 L186.5 731.5 H191.5" stroke="#2a6ad0" stroke-width="1.2"/>
 <path d="M205 735 L208 739 L211 735 M208 739 V743" stroke="#3aa02a" stroke-width="1.3"/>
 <path d="M190 750 L195.5 758 M195.5 750 L190 758" stroke="#e02a10" stroke-width="1.6"/>
</g>
</svg>


<!-- ============ BOTTOM PANEL ============ -->
<div class="a" style="left:0;top:765px;width:1416px;height:330px;background:#151515"></div>
<svg style="left:3px;top:771px" width="14" height="14" viewBox="0 0 14 14"><path d="M0.5 1.5 H5 L6.5 3 H11 V6 A4.5 4.5 0 0 0 6.5 12.5 H0.5Z" fill="#a8a8a8"/><circle cx="9.5" cy="9" r="3" fill="none" stroke="#c8c8c8" stroke-width="1.3"/><path d="M7.3 11.2 L5.5 13.2" stroke="#c8c8c8" stroke-width="1.4"/></svg>
<div class="t" style="left:21px;top:772px;color:#c0c0c0">Content Browser</div>
<div class="a" style="left:128px;top:770px;width:126px;height:19px;background:#242424;border-radius:4px 4px 0 0"></div>
<svg style="left:132px;top:772px" width="14" height="13" viewBox="0 0 14 13"><path d="M0.5 4 L12.5 0.8 L13.2 3 L1.2 6.2Z" fill="#c8c8c8"/><rect x="1" y="6.5" width="12" height="6" fill="#c8c8c8"/><rect x="2.5" y="8" width="9" height="3" fill="#777"/></svg>
<div class="a" style="left:155px;top:769px;width:68px;height:1px;background:#1e3a58"></div><div class="t" style="left:149px;top:772px;color:#e0e0e0">Sequencer</div>
<svg style="left:236px;top:775px" width="8" height="8" viewBox="0 0 8 8"><path d="M1 1 L7 7 M7 1 L1 7" stroke="#d0d0d0" stroke-width="1.3"/></svg>

<!-- seq toolbar -->
<div class="a" style="left:0;top:789px;width:1416px;height:30px;background:#242424"></div>
<svg style="left:10px;top:795px" width="16" height="16" viewBox="0 0 16 16"><circle cx="8" cy="8" r="7" fill="#9a9a9a"/><path d="M3 4 Q6 5 7 8 Q5 11 6 14 Q2 12 2 8Z M10 2 Q13 4 12 7 Q10 6 9 4Z" fill="#6a6a6a"/></svg>
<svg style="left:29px;top:801px" width="9" height="6" viewBox="0 0 9 6"><path d="M1 1 L4.5 4.5 L8 1" fill="none" stroke="#c8c8c8" stroke-width="1.4"/></svg>
<div class="a" style="left:56px;top:793px;width:1px;height:22px;background:#1a1a1a"></div>
<svg style="left:68px;top:797px" width="13" height="13" viewBox="0 0 13 13"><path d="M0.5 0.5 H9.5 L12.5 3.5 V12.5 H0.5Z" fill="#a8a8a8"/><rect x="2.5" y="1" width="6" height="3.5" fill="#3a3a3a"/><rect x="2.5" y="8" width="8" height="4.5" fill="#d0d0d0"/></svg>
<svg style="left:92px;top:796px" width="17" height="16" viewBox="0 0 17 16"><path d="M0.5 2 H5 L6.5 3.5 H11 V7 A5 5 0 0 0 8 14 H0.5Z" fill="#a0a0a0"/><circle cx="11" cy="10" r="3.5" fill="none" stroke="#c8c8c8" stroke-width="1.5"/><path d="M8.5 12.5 L6.5 15" stroke="#c8c8c8" stroke-width="1.6"/></svg>
<svg style="left:122px;top:796px" width="16" height="15" viewBox="0 0 16 15"><circle cx="4" cy="3.5" r="3" fill="#a0a0a0"/><circle cx="9" cy="3.5" r="3" fill="#a0a0a0"/><rect x="0.5" y="6" width="11" height="8.5" fill="#c0c0c0"/><path d="M11.5 10 L16 6.5 V13.5Z" fill="#c0c0c0"/></svg>
<svg style="left:151px;top:797px" width="15" height="13" viewBox="0 0 15 13"><path d="M0.5 4 L13.5 0.8 L14.2 3 L1.2 6.2Z" fill="#a8a8a8"/><rect x="1" y="6.5" width="13" height="6" fill="#a8a8a8"/><rect x="2.5" y="8" width="10" height="3" fill="#5a5a5a"/></svg>
<svg style="left:178px;top:797px" width="4" height="14" viewBox="0 0 4 14"><circle cx="2" cy="2" r="1.4" fill="#c0c0c0"/><circle cx="2" cy="7" r="1.4" fill="#c0c0c0"/><circle cx="2" cy="12" r="1.4" fill="#c0c0c0"/></svg>
<svg style="left:192px;top:795px" width="17" height="17" viewBox="0 0 17 17"><circle cx="13" cy="3" r="2.3" fill="#c8c8c8"/><circle cx="13" cy="9" r="2.3" fill="#c8c8c8"/><circle cx="9" cy="6" r="2.3" fill="#c8c8c8"/><path d="M1 16 L5 8 L8 13 L10 10 L13 16Z" fill="#d0d0d0"/><path d="M0 16.5 H16" stroke="#a0a0a0" stroke-width="1"/></svg>
<div class="a" style="left:216px;top:793px;width:1px;height:22px;background:#1a1a1a"></div>
<svg style="left:225px;top:795px" width="16" height="16" viewBox="0 0 16 16"><path d="M2 14 L9 7" stroke="#b0b0b0" stroke-width="2.6" stroke-linecap="round"/><path d="M9 7 A4 4 0 1 1 13.5 2.5 L11 5 L12 6 L14.5 3.5 A4 4 0 0 1 9 7" fill="#c8c8c8"/></svg>
<svg style="left:244px;top:801px" width="9" height="6" viewBox="0 0 9 6"><path d="M1 1 L4.5 4.5 L8 1" fill="none" stroke="#c8c8c8" stroke-width="1.4"/></svg>
<svg style="left:268px;top:798px" width="17" height="11" viewBox="0 0 17 11"><path d="M0.5 5.5 Q8.5 -3 16.5 5.5 Q8.5 14 0.5 5.5Z" fill="#e0e0e0"/><circle cx="8.5" cy="5.5" r="3.2" fill="#2a2a2a"/><circle cx="7.5" cy="4.8" r="1.2" fill="#e0e0e0"/></svg>
<svg style="left:287px;top:801px" width="9" height="6" viewBox="0 0 9 6"><path d="M1 1 L4.5 4.5 L8 1" fill="none" stroke="#c8c8c8" stroke-width="1.4"/></svg>
<svg style="left:311px;top:795px" width="16" height="16" viewBox="0 0 16 16"><path d="M6 0.5 L7 3 L9.5 2 L8.5 4.5 L11 5.5 L8.5 6.5 L9.5 9 L7 8 L6 10.5 L5 8 L2.5 9 L3.5 6.5 L1 5.5 L3.5 4.5 L2.5 2 L5 3Z" fill="#c8c8c8"/><path d="M7 7 L15.5 11 L11.5 12 L9 15.5Z" fill="#e0e0e0" stroke="#242424" stroke-width="0.8"/></svg>
<svg style="left:330px;top:801px" width="9" height="6" viewBox="0 0 9 6"><path d="M1 1 L4.5 4.5 L8 1" fill="none" stroke="#c8c8c8" stroke-width="1.4"/></svg>
<div class="a" style="left:350px;top:793px;width:1px;height:22px;background:#1a1a1a"></div>
<svg style="left:359px;top:796px" width="15" height="15" viewBox="0 0 15 15"><path d="M7.5 1 L14 7.5 L7.5 14 L1 7.5Z" fill="none" stroke="#d0d0d0" stroke-width="1.6"/></svg>
<svg style="left:377px;top:801px" width="9" height="6" viewBox="0 0 9 6"><path d="M1 1 L4.5 4.5 L8 1" fill="none" stroke="#c8c8c8" stroke-width="1.4"/></svg>
<svg style="left:402px;top:796px" width="15" height="15" viewBox="0 0 15 15"><path d="M7.5 0.5 L14.5 7.5 L7.5 14.5 L0.5 7.5Z" fill="#d0d0d0"/><circle cx="5.5" cy="7.5" r="1.8" fill="none" stroke="#242424" stroke-width="1.2"/><path d="M7 7.5 H11 M10 7.5 V9.5" stroke="#242424" stroke-width="1.2"/></svg>
<svg style="left:430px;top:796px" width="16" height="15" viewBox="0 0 16 15"><path d="M2 11 L10 2 L13 5 L5 13.5 L1.5 14Z" fill="#c8c8c8"/><path d="M0 14.5 H15" stroke="#888" stroke-width="1"/></svg>
<svg style="left:449px;top:801px" width="9" height="6" viewBox="0 0 9 6"><path d="M1 1 L4.5 4.5 L8 1" fill="none" stroke="#c8c8c8" stroke-width="1.4"/></svg>
<div class="a" style="left:468px;top:793px;width:1px;height:22px;background:#1a1a1a"></div>
<div class="a" style="left:471px;top:793px;width:29px;height:22px;background:#0b60dc;border-radius:3px 0 0 3px"></div>
<div class="a" style="left:500px;top:793px;width:12px;height:22px;background:#2e2e2e;border-radius:0 3px 3px 0"></div>
<svg style="left:478px;top:797px" width="14" height="14" viewBox="0 0 14 14"><path d="M2 13 V6 A5 5 0 0 1 12 6 V13" fill="none" stroke="#fff" stroke-width="3.4"/><path d="M0.3 10.5 H3.7 M10.3 10.5 H13.7" stroke="#0b60dc" stroke-width="1"/></svg>
<svg style="left:504px;top:797px" width="4" height="14" viewBox="0 0 4 14"><circle cx="2" cy="2" r="1.4" fill="#c0c0c0"/><circle cx="2" cy="7" r="1.4" fill="#c0c0c0"/><circle cx="2" cy="12" r="1.4" fill="#c0c0c0"/></svg>
<div class="t" style="left:522px;top:797px;color:#d0d0d0">30 fps</div>
<svg style="left:559px;top:801px" width="9" height="6" viewBox="0 0 9 6"><path d="M1 1 L4.5 4.5 L8 1" fill="none" stroke="#c8c8c8" stroke-width="1.4"/></svg>
<div class="a" style="left:585px;top:793px;width:1px;height:22px;background:#1a1a1a"></div>
<svg style="left:596px;top:795px" width="16" height="16" viewBox="0 0 16 16"><path d="M0.5 0.5 V15.5 H15.5 M0.5 5.5 H15.5 M0.5 10.5 H15.5 M5.5 0.5 V15.5 M10.5 0.5 V15.5" fill="none" stroke="#909090" stroke-width="1"/><path d="M1 9 Q4 2 8 8 Q12 14 15 6" fill="none" stroke="#e0e0e0" stroke-width="1.6"/></svg>
<div class="t" style="left:1310px;top:797px;color:#d8d8d8;font-weight:bold;font-size:10.5px;letter-spacing:-0.45px">Loop4Jumpscare</div>
<svg style="left:1398px;top:796px" width="12" height="13" viewBox="0 0 12 13"><path d="M6 6 V3.5 A3 3 0 0 1 12 3.5" fill="none" stroke="#d0d0d0" stroke-width="1.5"/><rect x="0.5" y="6" width="8" height="6.5" fill="#d0d0d0"/><rect x="3.5" y="8.5" width="2" height="2" fill="#242424"/></svg>


<!-- add/search row -->
<div class="a" style="left:0;top:819px;width:425px;height:24px;background:#242424"></div>
<div class="a" style="left:5px;top:821px;width:54px;height:19px;background:#303030;border-radius:3px"></div>
<svg style="left:16px;top:825px" width="11" height="11" viewBox="0 0 11 11"><path d="M5.5 0 V11 M0 5.5 H11" stroke="#7cc03a" stroke-width="1.6"/></svg>
<div class="t" style="left:30px;top:824px;color:#e0e0e0">Add</div>
<div class="a" style="left:62px;top:822px;width:334px;height:17px;background:#0f0f0f;border-radius:9px;border:1px solid #2a2a2a"></div>
<svg style="left:66px;top:824px" width="13" height="13" viewBox="0 0 13 13"><circle cx="5.5" cy="5.5" r="4" fill="none" stroke="#d8d8d8" stroke-width="1.4"/><path d="M8.5 8.5 L12 12" stroke="#d8d8d8" stroke-width="1.5"/></svg>
<div class="t" style="left:84px;top:824px;color:#5a5a5a">Search Tracks</div>
<svg style="left:401px;top:825px" width="12" height="10" viewBox="0 0 12 10"><path d="M0 1 H12 M2 5 H10 M4 9 H8" stroke="#c8c8c8" stroke-width="1.5"/></svg>
<!-- ruler -->
<div class="a" style="left:425px;top:818px;width:984px;height:25px;background:#121212"></div>
<div class="a" style="left:456.2px;top:835px;width:1.5px;height:7.5px;background:#c8c8c8"></div><div class="t" style="left:460.2px;top:833px;font-size:9px;line-height:11px;color:#b0b0b0">0005</div>
<div class="a" style="left:523.0px;top:835px;width:1.5px;height:7.5px;background:#c8c8c8"></div><div class="t" style="left:527.0px;top:833px;font-size:9px;line-height:11px;color:#b0b0b0">0010</div>
<div class="a" style="left:589.8px;top:835px;width:1.5px;height:7.5px;background:#c8c8c8"></div><div class="t" style="left:593.8px;top:833px;font-size:9px;line-height:11px;color:#b0b0b0">0015</div>
<div class="a" style="left:656.6px;top:835px;width:1.5px;height:7.5px;background:#c8c8c8"></div><div class="t" style="left:660.6px;top:833px;font-size:9px;line-height:11px;color:#b0b0b0">0020</div>
<div class="a" style="left:723.4px;top:835px;width:1.5px;height:7.5px;background:#c8c8c8"></div><div class="t" style="left:727.4px;top:833px;font-size:9px;line-height:11px;color:#b0b0b0">0025</div>
<div class="a" style="left:790.2px;top:835px;width:1.5px;height:7.5px;background:#c8c8c8"></div><div class="t" style="left:794.2px;top:833px;font-size:9px;line-height:11px;color:#b0b0b0">0030</div>
<div class="a" style="left:857.0px;top:835px;width:1.5px;height:7.5px;background:#c8c8c8"></div><div class="t" style="left:861.0px;top:833px;font-size:9px;line-height:11px;color:#b0b0b0">0035</div>
<div class="a" style="left:923.8px;top:835px;width:1.5px;height:7.5px;background:#c8c8c8"></div><div class="t" style="left:927.8px;top:833px;font-size:9px;line-height:11px;color:#b0b0b0">0040</div>
<div class="a" style="left:990.6px;top:835px;width:1.5px;height:7.5px;background:#c8c8c8"></div><div class="t" style="left:994.6px;top:833px;font-size:9px;line-height:11px;color:#b0b0b0">0045</div>
<div class="a" style="left:1057.4px;top:835px;width:1.5px;height:7.5px;background:#c8c8c8"></div><div class="t" style="left:1061.4px;top:833px;font-size:9px;line-height:11px;color:#b0b0b0">0050</div>
<div class="a" style="left:1124.2px;top:835px;width:1.5px;height:7.5px;background:#c8c8c8"></div><div class="t" style="left:1128.2px;top:833px;font-size:9px;line-height:11px;color:#b0b0b0">0055</div>
<div class="a" style="left:1191.0px;top:835px;width:1.5px;height:7.5px;background:#c8c8c8"></div><div class="t" style="left:1195.0px;top:833px;font-size:9px;line-height:11px;color:#b0b0b0">0060</div>
<div class="a" style="left:1257.8px;top:835px;width:1.5px;height:7.5px;background:#c8c8c8"></div><div class="t" style="left:1261.8px;top:833px;font-size:9px;line-height:11px;color:#b0b0b0">0065</div>
<div class="a" style="left:1324.6px;top:835px;width:1.5px;height:7.5px;background:#c8c8c8"></div><div class="t" style="left:1328.6px;top:833px;font-size:9px;line-height:11px;color:#b0b0b0">0070</div>
<div class="a" style="left:1391.4px;top:835px;width:1.5px;height:7.5px;background:#c8c8c8"></div><div class="t" style="left:1395.4px;top:833px;font-size:9px;line-height:11px;color:#b0b0b0">0075</div>

<!--TRACKS-->
<div class="a" style="left:0;top:843px;width:1416px;height:209px;overflow:hidden;background:#0c0c0c">
<div class="a" style="left:0;top:-10px;width:75px;height:21px;background:#1b1b1b"></div><div class="a" style="left:76px;top:-10px;width:282px;height:21px;background:#1b1b1b"></div><div class="a" style="left:359px;top:-10px;width:58px;height:21px;background:#1b1b1b"></div>
<div class="a" style="left:418px;top:-10px;width:4px;height:21px;background:#4a4a4a"></div>
<svg style="left:24px;top:-4px" width="9" height="10" viewBox="0 0 9 10"><path d="M2.2 4.5 V3 A2.3 2.3 0 0 1 6.8 3 V4.5" fill="none" stroke="#3e3e3e" stroke-width="1.2"/><rect x="0.5" y="4.5" width="8" height="5.5" fill="#3e3e3e"/></svg><svg style="left:41px;top:-4px" width="10" height="10" viewBox="0 0 10 10"><path d="M1 8 V5 A4 4 0 0 1 9 5 V8" fill="none" stroke="#3e3e3e" stroke-width="1.2"/><rect x="0" y="6" width="2.2" height="4" rx="1" fill="#3e3e3e"/><rect x="7.8" y="6" width="2.2" height="4" rx="1" fill="#3e3e3e"/></svg><svg style="left:57px;top:-4px" width="10" height="10" viewBox="0 0 10 10"><circle cx="5" cy="5" r="4.3" fill="none" stroke="#3e3e3e" stroke-width="1.1"/><path d="M2 8 L8 2" stroke="#3e3e3e" stroke-width="1.1"/></svg>
<div class="t" style="left:117px;top:-5px;font-size:10.9px;font-style:italic;color:#d0d0d0;max-width:110px;overflow:hidden;letter-spacing:-0.3px">Current Aperture</div>
<div class="t" style="left:237px;top:-5px;font-size:10.4px;color:#8e8e8e;letter-spacing:-0.2px">7,802962</div><div class="a" style="left:236px;top:7px;width:46px;height:1px;background:#444"></div>
<svg style="left:339px;top:-4px" width="10" height="10" viewBox="0 0 10 10"><path d="M5 0 V10 M0 5 H10" stroke="#4a4a4a" stroke-width="1.2"/></svg><svg style="left:366px;top:-4px" width="46" height="10" viewBox="0 0 46 10"><path d="M4.8 0.8 L1 5 L4.8 9.2" fill="none" stroke="#3c3c3c" stroke-width="1.2"/><path d="M7.8 3.2 L9.6 5 L7.8 6.8 L6 5Z" fill="#3c3c3c"/><path d="M22.5 0.6 L26.9 5 L22.5 9.4 L18.1 5Z" fill="none" stroke="#3c3c3c" stroke-width="1.2"/><path d="M39.2 3.2 L41 5 L39.2 6.8 L37.4 5Z" fill="#3c3c3c"/><path d="M42.2 0.8 L46 5 L42.2 9.2" fill="none" stroke="#3c3c3c" stroke-width="1.2"/></svg>
<div class="a" style="left:0;top:13px;width:75px;height:21px;background:#1b1b1b"></div><div class="a" style="left:76px;top:13px;width:282px;height:21px;background:#1b1b1b"></div><div class="a" style="left:359px;top:13px;width:58px;height:21px;background:#1b1b1b"></div>
<div class="a" style="left:418px;top:13px;width:4px;height:21px;background:#4a4a4a"></div>
<svg style="left:24px;top:19px" width="9" height="10" viewBox="0 0 9 10"><path d="M2.2 4.5 V3 A2.3 2.3 0 0 1 6.8 3 V4.5" fill="none" stroke="#3e3e3e" stroke-width="1.2"/><rect x="0.5" y="4.5" width="8" height="5.5" fill="#3e3e3e"/></svg><svg style="left:41px;top:19px" width="10" height="10" viewBox="0 0 10 10"><path d="M1 8 V5 A4 4 0 0 1 9 5 V8" fill="none" stroke="#3e3e3e" stroke-width="1.2"/><rect x="0" y="6" width="2.2" height="4" rx="1" fill="#3e3e3e"/><rect x="7.8" y="6" width="2.2" height="4" rx="1" fill="#3e3e3e"/></svg><svg style="left:57px;top:19px" width="10" height="10" viewBox="0 0 10 10"><circle cx="5" cy="5" r="4.3" fill="none" stroke="#3e3e3e" stroke-width="1.1"/><path d="M2 8 L8 2" stroke="#3e3e3e" stroke-width="1.1"/></svg>
<div class="t" style="left:117px;top:18px;font-size:10.9px;font-style:italic;color:#d0d0d0;max-width:110px;overflow:hidden;letter-spacing:-0.3px">Current Focal Length</div>
<div class="t" style="left:237px;top:18px;font-size:10.4px;color:#8e8e8e;letter-spacing:-0.2px">7,0</div><div class="a" style="left:236px;top:30px;width:17px;height:1px;background:#444"></div>
<svg style="left:339px;top:19px" width="10" height="10" viewBox="0 0 10 10"><path d="M5 0 V10 M0 5 H10" stroke="#4a4a4a" stroke-width="1.2"/></svg><svg style="left:366px;top:19px" width="46" height="10" viewBox="0 0 46 10"><path d="M4.8 0.8 L1 5 L4.8 9.2" fill="none" stroke="#3c3c3c" stroke-width="1.2"/><path d="M7.8 3.2 L9.6 5 L7.8 6.8 L6 5Z" fill="#3c3c3c"/><path d="M22.5 0.6 L26.9 5 L22.5 9.4 L18.1 5Z" fill="none" stroke="#3c3c3c" stroke-width="1.2"/><path d="M39.2 3.2 L41 5 L39.2 6.8 L37.4 5Z" fill="#3c3c3c"/><path d="M42.2 0.8 L46 5 L42.2 9.2" fill="none" stroke="#3c3c3c" stroke-width="1.2"/></svg>
<div class="a" style="left:0;top:36px;width:75px;height:21px;background:#1b1b1b"></div><div class="a" style="left:76px;top:36px;width:282px;height:21px;background:#1b1b1b"></div><div class="a" style="left:359px;top:36px;width:58px;height:21px;background:#1b1b1b"></div>
<div class="a" style="left:418px;top:36px;width:4px;height:21px;background:#4a4a4a"></div>
<svg style="left:24px;top:42px" width="9" height="10" viewBox="0 0 9 10"><path d="M2.2 4.5 V3 A2.3 2.3 0 0 1 6.8 3 V4.5" fill="none" stroke="#3e3e3e" stroke-width="1.2"/><rect x="0.5" y="4.5" width="8" height="5.5" fill="#3e3e3e"/></svg><svg style="left:41px;top:42px" width="10" height="10" viewBox="0 0 10 10"><path d="M1 8 V5 A4 4 0 0 1 9 5 V8" fill="none" stroke="#3e3e3e" stroke-width="1.2"/><rect x="0" y="6" width="2.2" height="4" rx="1" fill="#3e3e3e"/><rect x="7.8" y="6" width="2.2" height="4" rx="1" fill="#3e3e3e"/></svg><svg style="left:57px;top:42px" width="10" height="10" viewBox="0 0 10 10"><circle cx="5" cy="5" r="4.3" fill="none" stroke="#3e3e3e" stroke-width="1.1"/><path d="M2 8 L8 2" stroke="#3e3e3e" stroke-width="1.1"/></svg>
<div class="t" style="left:117px;top:41px;font-size:10.4px;font-style:normal;color:#d0d0d0;max-width:110px;overflow:hidden;letter-spacing:-0.5px">Manual Focus Distance (F</div>
<div class="t" style="left:237px;top:41px;font-size:10.4px;color:#8e8e8e;letter-spacing:-0.2px">100000,0</div><div class="a" style="left:236px;top:53px;width:46px;height:1px;background:#444"></div>
<svg style="left:339px;top:42px" width="10" height="10" viewBox="0 0 10 10"><path d="M5 0 V10 M0 5 H10" stroke="#4a4a4a" stroke-width="1.2"/></svg><svg style="left:366px;top:42px" width="46" height="10" viewBox="0 0 46 10"><path d="M4.8 0.8 L1 5 L4.8 9.2" fill="none" stroke="#3c3c3c" stroke-width="1.2"/><path d="M7.8 3.2 L9.6 5 L7.8 6.8 L6 5Z" fill="#3c3c3c"/><path d="M22.5 0.6 L26.9 5 L22.5 9.4 L18.1 5Z" fill="none" stroke="#3c3c3c" stroke-width="1.2"/><path d="M39.2 3.2 L41 5 L39.2 6.8 L37.4 5Z" fill="#3c3c3c"/><path d="M42.2 0.8 L46 5 L42.2 9.2" fill="none" stroke="#3c3c3c" stroke-width="1.2"/></svg>
<div class="a" style="left:0;top:59px;width:75px;height:21px;background:#1b1b1b"></div><div class="a" style="left:76px;top:59px;width:282px;height:21px;background:#1b1b1b"></div><div class="a" style="left:359px;top:59px;width:58px;height:21px;background:#1b1b1b"></div>
<div class="a" style="left:418px;top:59px;width:4px;height:21px;background:#4a4a4a"></div>
<svg style="left:24px;top:65px" width="9" height="10" viewBox="0 0 9 10"><path d="M2.2 4.5 V3 A2.3 2.3 0 0 1 6.8 3 V4.5" fill="none" stroke="#3e3e3e" stroke-width="1.2"/><rect x="0.5" y="4.5" width="8" height="5.5" fill="#3e3e3e"/></svg><svg style="left:41px;top:65px" width="10" height="10" viewBox="0 0 10 10"><path d="M1 8 V5 A4 4 0 0 1 9 5 V8" fill="none" stroke="#3e3e3e" stroke-width="1.2"/><rect x="0" y="6" width="2.2" height="4" rx="1" fill="#3e3e3e"/><rect x="7.8" y="6" width="2.2" height="4" rx="1" fill="#3e3e3e"/></svg><svg style="left:57px;top:65px" width="10" height="10" viewBox="0 0 10 10"><circle cx="5" cy="5" r="4.3" fill="none" stroke="#3e3e3e" stroke-width="1.1"/><path d="M2 8 L8 2" stroke="#3e3e3e" stroke-width="1.1"/></svg>
<div class="t" style="left:117px;top:64px;font-size:10.4px;font-style:normal;color:#d0d0d0;max-width:110px;overflow:hidden;letter-spacing:-0.3px">Visibility</div>
<div class="a" style="left:236px;top:63px;width:14px;height:14px;background:#0d0d0d;border:1px solid #2e2e2e;border-radius:2px"></div><svg style="left:238px;top:66px" width="10" height="8" viewBox="0 0 10 8"><path d="M1 4 L4 7 L9 1" fill="none" stroke="#1a70e0" stroke-width="1.8"/></svg>
<svg style="left:339px;top:65px" width="10" height="10" viewBox="0 0 10 10"><path d="M5 0 V10 M0 5 H10" stroke="#4a4a4a" stroke-width="1.2"/></svg><svg style="left:366px;top:65px" width="46" height="10" viewBox="0 0 46 10"><path d="M4.8 0.8 L1 5 L4.8 9.2" fill="none" stroke="#3c3c3c" stroke-width="1.2"/><path d="M7.8 3.2 L9.6 5 L7.8 6.8 L6 5Z" fill="#3c3c3c"/><path d="M22.5 0.6 L26.9 5 L22.5 9.4 L18.1 5Z" fill="none" stroke="#3c3c3c" stroke-width="1.2"/><path d="M39.2 3.2 L41 5 L39.2 6.8 L37.4 5Z" fill="#3c3c3c"/><path d="M42.2 0.8 L46 5 L42.2 9.2" fill="none" stroke="#3c3c3c" stroke-width="1.2"/></svg>
<div class="a" style="left:0;top:82px;width:75px;height:21px;background:#1b1b1b"></div><div class="a" style="left:76px;top:82px;width:282px;height:21px;background:#1b1b1b"></div><div class="a" style="left:359px;top:82px;width:58px;height:21px;background:#1b1b1b"></div>
<div class="a" style="left:418px;top:82px;width:4px;height:21px;background:#4e8c8c"></div>
<svg style="left:24px;top:88px" width="9" height="10" viewBox="0 0 9 10"><path d="M2.2 4.5 V3 A2.3 2.3 0 0 1 6.8 3 V4.5" fill="none" stroke="#3e3e3e" stroke-width="1.2"/><rect x="0.5" y="4.5" width="8" height="5.5" fill="#3e3e3e"/></svg><svg style="left:41px;top:88px" width="10" height="10" viewBox="0 0 10 10"><path d="M1 8 V5 A4 4 0 0 1 9 5 V8" fill="none" stroke="#3e3e3e" stroke-width="1.2"/><rect x="0" y="6" width="2.2" height="4" rx="1" fill="#3e3e3e"/><rect x="7.8" y="6" width="2.2" height="4" rx="1" fill="#3e3e3e"/></svg><svg style="left:57px;top:88px" width="10" height="10" viewBox="0 0 10 10"><circle cx="5" cy="5" r="4.3" fill="none" stroke="#3e3e3e" stroke-width="1.1"/><path d="M2 8 L8 2" stroke="#3e3e3e" stroke-width="1.1"/></svg>
<div class="t" style="left:110px;top:87px;font-size:10.4px;font-style:normal;color:#d0d0d0;max-width:230px;overflow:hidden;letter-spacing:-0.3px">Transform</div>
<svg style="left:96px;top:88px" width="5" height="9" viewBox="0 0 5 9"><path d="M0 0 L5 4.5 L0 9Z" fill="#9a9a9a"/></svg><svg style="left:339px;top:88px" width="10" height="10" viewBox="0 0 10 10"><path d="M5 0 V10 M0 5 H10" stroke="#4a4a4a" stroke-width="1.2"/></svg><svg style="left:366px;top:88px" width="46" height="10" viewBox="0 0 46 10"><path d="M4.8 0.8 L1 5 L4.8 9.2" fill="none" stroke="#3c3c3c" stroke-width="1.2"/><path d="M7.8 3.2 L9.6 5 L7.8 6.8 L6 5Z" fill="#3c3c3c"/><path d="M22.5 0.6 L26.9 5 L22.5 9.4 L18.1 5Z" fill="none" stroke="#3c3c3c" stroke-width="1.2"/><path d="M39.2 3.2 L41 5 L39.2 6.8 L37.4 5Z" fill="#3c3c3c"/><path d="M42.2 0.8 L46 5 L42.2 9.2" fill="none" stroke="#3c3c3c" stroke-width="1.2"/></svg>
<div class="a" style="left:0;top:105px;width:75px;height:21px;background:#3d5675"></div><div class="a" style="left:76px;top:105px;width:282px;height:21px;background:#3d5675"></div><div class="a" style="left:359px;top:105px;width:58px;height:21px;background:#3d5675"></div>
<div class="a" style="left:418px;top:105px;width:4px;height:21px;background:#3d5675"></div>
<svg style="left:24px;top:111px" width="9" height="10" viewBox="0 0 9 10"><path d="M2.2 4.5 V3 A2.3 2.3 0 0 1 6.8 3 V4.5" fill="none" stroke="#5a7494" stroke-width="1.2"/><rect x="0.5" y="4.5" width="8" height="5.5" fill="#5a7494"/></svg><svg style="left:41px;top:111px" width="10" height="10" viewBox="0 0 10 10"><path d="M1 8 V5 A4 4 0 0 1 9 5 V8" fill="none" stroke="#5a7494" stroke-width="1.2"/><rect x="0" y="6" width="2.2" height="4" rx="1" fill="#5a7494"/><rect x="7.8" y="6" width="2.2" height="4" rx="1" fill="#5a7494"/></svg><svg style="left:57px;top:111px" width="10" height="10" viewBox="0 0 10 10"><circle cx="5" cy="5" r="4.3" fill="none" stroke="#5a7494" stroke-width="1.1"/><path d="M2 8 L8 2" stroke="#5a7494" stroke-width="1.1"/></svg>
<svg style="left:9px;top:110px" width="8" height="11" viewBox="0 0 8 11"><path d="M2 0.5 H6 L5 4 L7 6 H1 L3 4Z M4 6 V11" fill="#5a7494" stroke="#5a7494" stroke-width="0.8"/></svg><div class="t" style="left:114px;top:110px;font-size:10.4px;font-style:normal;color:#e8e8e8;max-width:230px;overflow:hidden;letter-spacing:-0.65px">Enemy_AnimationsEnemy_Run_Anim</div>
<svg style="left:87px;top:113px" width="8" height="5" viewBox="0 0 8 5"><path d="M0 0 H8 L4 5Z" fill="#a8b4c4"/></svg><svg style="left:99px;top:110px" width="11" height="13" viewBox="0 0 11 13"><circle cx="5.5" cy="2.8" r="2.7" fill="#f0f0f0"/><path d="M1 12 V8 Q1 6 3 6 H8 Q10 6 10 8 V12 M4 6.5 V12 M7 6.5 V12" stroke="#f0f0f0" stroke-width="1.1" fill="none"/></svg><svg style="left:339px;top:111px" width="10" height="10" viewBox="0 0 10 10"><path d="M5 0 V10 M0 5 H10" stroke="#6a84a4" stroke-width="1.2"/></svg><div class="a" style="left:0;top:128px;width:75px;height:21px;background:#1b1b1b"></div><div class="a" style="left:76px;top:128px;width:282px;height:21px;background:#1b1b1b"></div><div class="a" style="left:359px;top:128px;width:58px;height:21px;background:#1b1b1b"></div>
<div class="a" style="left:418px;top:128px;width:4px;height:21px;background:#6a4c72"></div>
<svg style="left:24px;top:134px" width="9" height="10" viewBox="0 0 9 10"><path d="M2.2 4.5 V3 A2.3 2.3 0 0 1 6.8 3 V4.5" fill="none" stroke="#3e3e3e" stroke-width="1.2"/><rect x="0.5" y="4.5" width="8" height="5.5" fill="#3e3e3e"/></svg><svg style="left:41px;top:134px" width="10" height="10" viewBox="0 0 10 10"><path d="M1 8 V5 A4 4 0 0 1 9 5 V8" fill="none" stroke="#3e3e3e" stroke-width="1.2"/><rect x="0" y="6" width="2.2" height="4" rx="1" fill="#3e3e3e"/><rect x="7.8" y="6" width="2.2" height="4" rx="1" fill="#3e3e3e"/></svg><svg style="left:57px;top:134px" width="10" height="10" viewBox="0 0 10 10"><circle cx="5" cy="5" r="4.3" fill="none" stroke="#3e3e3e" stroke-width="1.1"/><path d="M2 8 L8 2" stroke="#3e3e3e" stroke-width="1.1"/></svg>
<div class="t" style="left:110px;top:133px;font-size:10.4px;font-style:normal;color:#d0d0d0;max-width:230px;overflow:hidden;letter-spacing:-0.3px">Animation</div>
<svg style="left:95px;top:136px" width="8" height="5" viewBox="0 0 8 5"><path d="M0 0 H8 L4 5Z" fill="#9a9a9a"/></svg><svg style="left:339px;top:134px" width="10" height="10" viewBox="0 0 10 10"><path d="M5 0 V10 M0 5 H10" stroke="#4a4a4a" stroke-width="1.2"/></svg><svg style="left:366px;top:134px" width="46" height="10" viewBox="0 0 46 10"><path d="M4.8 0.8 L1 5 L4.8 9.2" fill="none" stroke="#3c3c3c" stroke-width="1.2"/><path d="M7.8 3.2 L9.6 5 L7.8 6.8 L6 5Z" fill="#3c3c3c"/><path d="M22.5 0.6 L26.9 5 L22.5 9.4 L18.1 5Z" fill="none" stroke="#3c3c3c" stroke-width="1.2"/><path d="M39.2 3.2 L41 5 L39.2 6.8 L37.4 5Z" fill="#3c3c3c"/><path d="M42.2 0.8 L46 5 L42.2 9.2" fill="none" stroke="#3c3c3c" stroke-width="1.2"/></svg>
<div class="a" style="left:0;top:151px;width:75px;height:21px;background:#1b1b1b"></div><div class="a" style="left:76px;top:151px;width:282px;height:21px;background:#1b1b1b"></div><div class="a" style="left:359px;top:151px;width:58px;height:21px;background:#1b1b1b"></div>
<div class="a" style="left:418px;top:151px;width:4px;height:21px;background:#6a4c72"></div>
<div class="t" style="left:117px;top:156px;font-size:10.9px;font-style:italic;color:#d0d0d0;max-width:110px;overflow:hidden;letter-spacing:-0.3px">Weight</div>
<div class="t" style="left:237px;top:156px;font-size:10.4px;color:#8e8e8e;letter-spacing:-0.2px">1,0</div><div class="a" style="left:236px;top:168px;width:17px;height:1px;background:#444"></div>
<svg style="left:366px;top:157px" width="46" height="10" viewBox="0 0 46 10"><path d="M4.8 0.8 L1 5 L4.8 9.2" fill="none" stroke="#3c3c3c" stroke-width="1.2"/><path d="M7.8 3.2 L9.6 5 L7.8 6.8 L6 5Z" fill="#3c3c3c"/><path d="M22.5 0.6 L26.9 5 L22.5 9.4 L18.1 5Z" fill="none" stroke="#3c3c3c" stroke-width="1.2"/><path d="M39.2 3.2 L41 5 L39.2 6.8 L37.4 5Z" fill="#3c3c3c"/><path d="M42.2 0.8 L46 5 L42.2 9.2" fill="none" stroke="#3c3c3c" stroke-width="1.2"/></svg>
<div class="a" style="left:0;top:174px;width:75px;height:21px;background:#1b1b1b"></div><div class="a" style="left:76px;top:174px;width:282px;height:21px;background:#1b1b1b"></div><div class="a" style="left:359px;top:174px;width:58px;height:21px;background:#1b1b1b"></div>
<div class="a" style="left:418px;top:174px;width:4px;height:21px;background:#4e8c8c"></div>
<svg style="left:24px;top:180px" width="9" height="10" viewBox="0 0 9 10"><path d="M2.2 4.5 V3 A2.3 2.3 0 0 1 6.8 3 V4.5" fill="none" stroke="#3e3e3e" stroke-width="1.2"/><rect x="0.5" y="4.5" width="8" height="5.5" fill="#3e3e3e"/></svg><svg style="left:41px;top:180px" width="10" height="10" viewBox="0 0 10 10"><path d="M1 8 V5 A4 4 0 0 1 9 5 V8" fill="none" stroke="#3e3e3e" stroke-width="1.2"/><rect x="0" y="6" width="2.2" height="4" rx="1" fill="#3e3e3e"/><rect x="7.8" y="6" width="2.2" height="4" rx="1" fill="#3e3e3e"/></svg><svg style="left:57px;top:180px" width="10" height="10" viewBox="0 0 10 10"><circle cx="5" cy="5" r="4.3" fill="none" stroke="#3e3e3e" stroke-width="1.1"/><path d="M2 8 L8 2" stroke="#3e3e3e" stroke-width="1.1"/></svg>
<div class="t" style="left:110px;top:179px;font-size:10.4px;font-style:normal;color:#d0d0d0;max-width:230px;overflow:hidden;letter-spacing:-0.3px">Transform</div>
<svg style="left:96px;top:180px" width="5" height="9" viewBox="0 0 5 9"><path d="M0 0 L5 4.5 L0 9Z" fill="#9a9a9a"/></svg><svg style="left:339px;top:180px" width="10" height="10" viewBox="0 0 10 10"><path d="M5 0 V10 M0 5 H10" stroke="#4a4a4a" stroke-width="1.2"/></svg><svg style="left:366px;top:180px" width="46" height="10" viewBox="0 0 46 10"><path d="M4.8 0.8 L1 5 L4.8 9.2" fill="none" stroke="#3c3c3c" stroke-width="1.2"/><path d="M7.8 3.2 L9.6 5 L7.8 6.8 L6 5Z" fill="#3c3c3c"/><path d="M22.5 0.6 L26.9 5 L22.5 9.4 L18.1 5Z" fill="none" stroke="#3c3c3c" stroke-width="1.2"/><path d="M39.2 3.2 L41 5 L39.2 6.8 L37.4 5Z" fill="#3c3c3c"/><path d="M42.2 0.8 L46 5 L42.2 9.2" fill="none" stroke="#3c3c3c" stroke-width="1.2"/></svg>
<div class="a" style="left:0;top:197px;width:75px;height:21px;background:#1b1b1b"></div><div class="a" style="left:76px;top:197px;width:282px;height:21px;background:#1b1b1b"></div><div class="a" style="left:359px;top:197px;width:58px;height:21px;background:#1b1b1b"></div>
<div class="a" style="left:418px;top:197px;width:4px;height:21px;background:#4a4a4a"></div>
<svg style="left:24px;top:203px" width="9" height="10" viewBox="0 0 9 10"><path d="M2.2 4.5 V3 A2.3 2.3 0 0 1 6.8 3 V4.5" fill="none" stroke="#3e3e3e" stroke-width="1.2"/><rect x="0.5" y="4.5" width="8" height="5.5" fill="#3e3e3e"/></svg><svg style="left:41px;top:203px" width="10" height="10" viewBox="0 0 10 10"><path d="M1 8 V5 A4 4 0 0 1 9 5 V8" fill="none" stroke="#3e3e3e" stroke-width="1.2"/><rect x="0" y="6" width="2.2" height="4" rx="1" fill="#3e3e3e"/><rect x="7.8" y="6" width="2.2" height="4" rx="1" fill="#3e3e3e"/></svg><svg style="left:57px;top:203px" width="10" height="10" viewBox="0 0 10 10"><circle cx="5" cy="5" r="4.3" fill="none" stroke="#3e3e3e" stroke-width="1.1"/><path d="M2 8 L8 2" stroke="#3e3e3e" stroke-width="1.1"/></svg>
<div class="t" style="left:110px;top:202px;font-size:10.9px;font-style:italic;color:#d0d0d0;max-width:117px;overflow:hidden;letter-spacing:-0.3px">Visibility</div>
<div class="a" style="left:236px;top:201px;width:14px;height:14px;background:#0d0d0d;border:1px solid #2e2e2e;border-radius:2px"></div>
<svg style="left:339px;top:203px" width="10" height="10" viewBox="0 0 10 10"><path d="M5 0 V10 M0 5 H10" stroke="#4a4a4a" stroke-width="1.2"/></svg><svg style="left:366px;top:203px" width="46" height="10" viewBox="0 0 46 10"><path d="M4.8 0.8 L1 5 L4.8 9.2" fill="none" stroke="#3c3c3c" stroke-width="1.2"/><path d="M7.8 3.2 L9.6 5 L7.8 6.8 L6 5Z" fill="#3c3c3c"/><path d="M22.5 0.6 L26.9 5 L22.5 9.4 L18.1 5Z" fill="none" stroke="#3c3c3c" stroke-width="1.2"/><path d="M39.2 3.2 L41 5 L39.2 6.8 L37.4 5Z" fill="#3c3c3c"/><path d="M42.2 0.8 L46 5 L42.2 9.2" fill="none" stroke="#3c3c3c" stroke-width="1.2"/></svg>
<div class="a" style="left:425px;top:-10px;width:984px;height:21px;background:#474747"></div>
<div class="a" style="left:425px;top:11px;width:984px;height:2px;background:#2c2c2c"></div>
<div class="a" style="left:425px;top:13px;width:984px;height:21px;background:#474747"></div>
<div class="a" style="left:425px;top:34px;width:984px;height:2px;background:#2c2c2c"></div>
<div class="a" style="left:425px;top:36px;width:984px;height:21px;background:#474747"></div>
<div class="a" style="left:425px;top:57px;width:984px;height:2px;background:#2c2c2c"></div>
<div class="a" style="left:425px;top:59px;width:984px;height:21px;background:#474747"></div>
<div class="a" style="left:425px;top:80px;width:984px;height:2px;background:#2c2c2c"></div>
<div class="a" style="left:425px;top:82px;width:984px;height:21px;background:#4a6b6c"></div>
<div class="a" style="left:425px;top:103px;width:984px;height:2px;background:#263a3a"></div>
<div class="a" style="left:425px;top:105px;width:984px;height:21px;background:#1e3046"></div>
<div class="a" style="left:425px;top:126px;width:984px;height:2px;background:#0c1622"></div>
<div class="a" style="left:425px;top:128px;width:984px;height:21px;background:#1e1e1e"></div>
<div class="a" style="left:425px;top:149px;width:984px;height:2px;background:#151515"></div>
<div class="a" style="left:425px;top:151px;width:984px;height:21px;background:#1e1e1e"></div>
<div class="a" style="left:425px;top:172px;width:984px;height:2px;background:#151515"></div>
<div class="a" style="left:425px;top:174px;width:984px;height:21px;background:#4a6b6c"></div>
<div class="a" style="left:425px;top:195px;width:984px;height:2px;background:#263a3a"></div>
<div class="a" style="left:425px;top:197px;width:984px;height:21px;background:#474747"></div>
<div class="a" style="left:425px;top:218px;width:984px;height:2px;background:#2c2c2c"></div>
<div class="a" style="left:425px;top:149px;width:984px;height:2px;background:#1e1e1e"></div>
<div class="a" style="left:456px;top:105px;width:1px;height:67px;background:rgba(0,0,0,0.35)"></div><div class="a" style="left:523px;top:105px;width:1px;height:67px;background:rgba(0,0,0,0.35)"></div><div class="a" style="left:590px;top:105px;width:1px;height:67px;background:rgba(0,0,0,0.35)"></div><div class="a" style="left:657px;top:105px;width:1px;height:67px;background:rgba(0,0,0,0.35)"></div><div class="a" style="left:723px;top:105px;width:1px;height:67px;background:rgba(0,0,0,0.35)"></div><div class="a" style="left:790px;top:105px;width:1px;height:67px;background:rgba(0,0,0,0.35)"></div><div class="a" style="left:857px;top:105px;width:1px;height:67px;background:rgba(0,0,0,0.35)"></div><div class="a" style="left:924px;top:105px;width:1px;height:67px;background:rgba(0,0,0,0.35)"></div><div class="a" style="left:991px;top:105px;width:1px;height:67px;background:rgba(0,0,0,0.35)"></div><div class="a" style="left:1057px;top:105px;width:1px;height:67px;background:rgba(0,0,0,0.35)"></div><div class="a" style="left:1124px;top:105px;width:1px;height:67px;background:rgba(0,0,0,0.35)"></div><div class="a" style="left:1191px;top:105px;width:1px;height:67px;background:rgba(0,0,0,0.35)"></div><div class="a" style="left:1258px;top:105px;width:1px;height:67px;background:rgba(0,0,0,0.35)"></div><div class="a" style="left:1325px;top:105px;width:1px;height:67px;background:rgba(0,0,0,0.35)"></div><div class="a" style="left:1391px;top:105px;width:1px;height:67px;background:rgba(0,0,0,0.35)"></div>
<div class="a" style="left:425px;top:68px;width:984px;height:4px;background:#2b8a2b"></div>
<div class="a" style="left:645px;top:105px;width:494px;height:21px;background:#577595"></div>
<div class="a" style="left:645px;top:126px;width:494px;height:1px;background:#2a4a6a"></div>
<div class="a" style="left:832px;top:128px;width:307px;height:21px;background:#5c4864;border-radius:2px 2px 0 0"></div>
<div class="a" style="left:832px;top:149px;width:307px;height:23px;background:#382c3a;border-radius:0 0 2px 2px"></div>
<div class="t" style="left:838px;top:133px;color:#e0d8e0;letter-spacing:-0.47px">Enemy_AnimationsEnemy_Run_Anim1</div>
<div class="a" style="left:425px;top:0;width:312px;height:209px;background:rgba(0,0,0,0.2)"></div>
<div class="a" style="left:1191px;top:0;width:218px;height:209px;background:rgba(0,0,0,0.33)"></div>
<div class="a" style="left:911px;top:23px;width:108px;height:1px;background:#222"></div>
<div class="a" style="left:911px;top:184px;width:108px;height:1px;background:#222"></div>
<div class="a" style="left:737px;top:23px;width:672px;height:1px;background:rgba(0,0,0,0.25)"></div>
<svg style="left:732px;top:18.5px" width="10" height="10" viewBox="0 0 10 10"><circle cx="5" cy="5" r="3.9" fill="#d4a888" stroke="#3a2420" stroke-width="1.4"/><path d="M5 1.5 V8.5" stroke="#f0e0d0" stroke-width="0.8"/></svg><svg style="left:906.5px;top:18.5px" width="10" height="10" viewBox="0 0 10 10"><circle cx="5" cy="5" r="3.9" fill="#d4a888" stroke="#3a2420" stroke-width="1.4"/><path d="M5 1.5 V8.5" stroke="#f0e0d0" stroke-width="0.8"/></svg><svg style="left:1014px;top:18.5px" width="10" height="10" viewBox="0 0 10 10"><circle cx="5" cy="5" r="3.9" fill="#d4a888" stroke="#3a2420" stroke-width="1.4"/><path d="M5 1.5 V8.5" stroke="#f0e0d0" stroke-width="0.8"/></svg><svg style="left:732px;top:87.5px" width="10" height="10" viewBox="0 0 10 10"><circle cx="5" cy="5" r="3.9" fill="#d4a888" stroke="#3a2420" stroke-width="1.4"/><path d="M5 1.5 V8.5" stroke="#f0e0d0" stroke-width="0.8"/></svg><svg style="left:906.5px;top:179.5px" width="10" height="10" viewBox="0 0 10 10"><circle cx="5" cy="5" r="3.9" fill="#d4a888" stroke="#3a2420" stroke-width="1.4"/><path d="M5 1.5 V8.5" stroke="#f0e0d0" stroke-width="0.8"/></svg><svg style="left:1014px;top:179.5px" width="10" height="10" viewBox="0 0 10 10"><circle cx="5" cy="5" r="3.9" fill="#d4a888" stroke="#3a2420" stroke-width="1.4"/><path d="M5 1.5 V8.5" stroke="#f0e0d0" stroke-width="0.8"/></svg>
<div class="a" style="left:425px;top:206px;width:984px;height:3px;background:#3e1a12"></div><div class="a" style="left:425px;top:206px;width:984px;height:1px;background:#7a2a14"></div>
<div class="a" style="left:737px;top:206px;width:402px;height:2px;background:#2a5a1a"></div>
<svg style="left:639.5px;top:202px" width="8" height="6" viewBox="0 0 8 6"><path d="M4 0 L8 4 L0 4Z" fill="#d8d8d8"/></svg><svg style="left:860.5px;top:202px" width="8" height="6" viewBox="0 0 8 6"><path d="M4 0 L8 4 L0 4Z" fill="#d8d8d8"/></svg><svg style="left:1135px;top:202px" width="8" height="6" viewBox="0 0 8 6"><path d="M4 0 L8 4 L0 4Z" fill="#d8d8d8"/></svg><div class="a" style="left:737px;top:0;width:1px;height:209px;background:#247a24"></div>
<div class="a" style="left:1190px;top:0;width:1px;height:209px;background:#a83a18"></div>
<div class="a" style="left:765px;top:0;width:11px;height:209px;background:rgba(255,255,255,0.04)"></div><div class="a" style="left:775px;top:0;width:1px;height:209px;background:rgba(200,200,200,0.22)"></div>
<div class="a" style="left:763.5px;top:0;width:1.5px;height:209px;background:#d0d0d0"></div>
<div class="a" style="left:1402px;top:66px;width:5px;height:83px;background:#4a4a4a;border-radius:2px"></div>
</div>
<div class="a" style="left:737px;top:819px;width:1px;height:24px;background:#2a8a2a"></div><div class="a" style="left:1190px;top:819px;width:1px;height:24px;background:#a83a18"></div><svg style="left:1189px;top:819px" width="4" height="4" viewBox="0 0 4 4"><path d="M0 0 H4 L0 4Z" fill="#c05020"/></svg><svg style="left:737px;top:818px" width="5" height="6" viewBox="0 0 5 6"><path d="M0 0 H5 L0 5Z" fill="#3a9a2a"/></svg><svg style="left:947px;top:841px" width="9" height="7" viewBox="0 0 9 7"><path d="M0 0 H9 L4.5 6Z" fill="#d06030"/></svg>
<div class="a" style="left:763px;top:819px;width:13px;height:23px;background:repeating-linear-gradient(45deg,#c8642e 0 2px,#8a3a1a 2px 3px);border-radius:2px"></div><div class="a" style="left:764px;top:841px;width:1px;height:2px;background:#fff"></div><div class="t" style="left:778px;top:818px;font-size:10.5px;color:#f0f0f0">0028</div>
<svg style="left:779px;top:830px" width="10" height="15" viewBox="0 0 10 15"><path d="M1 1 L9 9 L5.5 9.3 L7.5 13.5 L6 14.2 L4 10 L1 12.5Z" fill="#fff" stroke="#222" stroke-width="0.8"/></svg>
<!--/TRACKS-->


<div class="a" style="left:1410px;top:765px;width:3px;height:287px;background:#151515"></div><div class="a" style="left:1413px;top:765px;width:3px;height:287px;background:#1e1e1e"></div>
<!-- ============ TRANSPORT ============ -->
<div class="a" style="left:0;top:1052px;width:425px;height:24px;background:#242424"></div>
<div class="a" style="left:425px;top:1052px;width:991px;height:24px;background:#1a1a1a"></div>
<svg style="left:2px;top:1058px" width="12" height="12" viewBox="0 0 12 12"><circle cx="6" cy="6" r="5.2" fill="none" stroke="#d0d0d0" stroke-width="1.2"/><rect x="5.3" y="5" width="1.4" height="4" fill="#d0d0d0"/><rect x="5.3" y="2.6" width="1.4" height="1.4" fill="#d0d0d0"/></svg>
<svg style="left:78px;top:1056px" width="16" height="16" viewBox="0 0 16 16"><circle cx="8" cy="8" r="7" fill="none" stroke="#a8a8a8" stroke-width="1.2"/><circle cx="8" cy="8" r="5.3" fill="#c41e0e"/></svg>
<svg style="left:109px;top:1057px" width="8" height="14" viewBox="0 0 8 14"><path d="M7.5 1 H3 Q0.5 7 3 13 H7.5 V11.5 H4.5 Q3 7 4.5 2.5 H7.5Z" fill="#7ac040"/></svg>
<svg style="left:127px;top:1058px" width="12" height="12" viewBox="0 0 12 12"><rect x="0" y="0" width="2" height="12" fill="#c8c8c8"/><path d="M12 0 V12 L3 6Z" fill="#c8c8c8"/></svg>
<svg style="left:145px;top:1058px" width="13" height="12" viewBox="0 0 13 12"><path d="M5 0.5 L0.5 6 L5 11.5" fill="none" stroke="#c8c8c8" stroke-width="1.8"/><path d="M9 2.5 L12.5 6 L9 9.5 L5.5 6Z" fill="#c8c8c8"/></svg>
<svg style="left:164px;top:1058px" width="13" height="12" viewBox="0 0 13 12"><path d="M8 0 V12 L0 6Z" fill="#c8c8c8"/><rect x="10" y="0" width="2" height="12" fill="#c8c8c8"/></svg>
<svg style="left:183px;top:1057px" width="12" height="14" viewBox="0 0 12 14"><path d="M11.5 0 V14 L0 7Z" fill="#c8c8c8"/></svg>
<svg style="left:203px;top:1057px" width="12" height="14" viewBox="0 0 12 14"><path d="M0.5 0 V14 L12 7Z" fill="#c8c8c8"/></svg>
<svg style="left:221px;top:1058px" width="13" height="12" viewBox="0 0 13 12"><rect x="0" y="0" width="2" height="12" fill="#c8c8c8"/><path d="M4 0 V12 L12.5 6Z" fill="#c8c8c8"/></svg>
<svg style="left:240px;top:1058px" width="13" height="12" viewBox="0 0 13 12"><path d="M8 0.5 L12.5 6 L8 11.5" fill="none" stroke="#c8c8c8" stroke-width="1.8"/><path d="M4 2.5 L7.5 6 L4 9.5 L0.5 6Z" fill="#c8c8c8"/></svg>
<svg style="left:259px;top:1058px" width="12" height="12" viewBox="0 0 12 12"><path d="M0 0 V12 L9 6Z" fill="#c8c8c8"/><rect x="10" y="0" width="2" height="12" fill="#c8c8c8"/></svg>
<svg style="left:282px;top:1057px" width="8" height="14" viewBox="0 0 8 14"><path d="M0.5 1 H5 Q7.5 7 5 13 H0.5 V11.5 H3.5 Q5 7 3.5 2.5 H0.5Z" fill="#d83a1a"/></svg>
<svg style="left:296px;top:1058px" width="15" height="12" viewBox="0 0 15 12"><path d="M0 6 H10" stroke="#c8c8c8" stroke-width="2.2"/><path d="M8 0.5 L14.5 6 L8 11.5Z" fill="#c8c8c8"/></svg>
<div class="t" style="left:381px;top:1057px;color:#e0e0e0">0028</div>
<div class="t" style="left:436px;top:1057px;color:#9a9a9a">-1507*</div>
<div class="a" style="left:435px;top:1070px;width:35px;height:1px;background:#3a3a3a"></div>
<div class="t" style="left:492px;top:1057px;color:#9a9a9a">0002*</div>
<div class="a" style="left:491px;top:1070px;width:31px;height:1px;background:#3a3a3a"></div>
<div class="a" style="left:1110px;top:1058px;width:51px;height:11px;background:#7a7a7a;border-radius:3px"></div>
<div class="a" style="left:1122px;top:1058px;width:26px;height:11px;background:#5e5e5e"></div>
<div class="t" style="left:1314px;top:1057px;color:#9a9a9a">0076*</div>
<div class="a" style="left:1313px;top:1070px;width:31px;height:1px;background:#3a3a3a"></div>
<div class="t" style="left:1368px;top:1057px;color:#9a9a9a">0442*</div>
<div class="a" style="left:1367px;top:1070px;width:31px;height:1px;background:#3a3a3a"></div>

<!-- ============ STATUS BAR ============ -->
<div class="a" style="left:0;top:1076px;width:1416px;height:3px;background:#151515"></div><div class="a" style="left:0;top:1078px;width:1416px;height:17px;background:#202020"></div><div class="a" style="left:506px;top:1078px;width:2px;height:17px;background:#151515"></div>
<div class="a" style="left:97px;top:1078px;width:7px;height:17px;background:#151515"></div>
<div class="a" style="left:182px;top:1078px;width:6px;height:17px;background:#151515"></div>
<svg style="left:5px;top:1082px" width="14" height="13" viewBox="0 0 14 13"><path d="M0.5 1.5 H5 L6.5 3 H11 V6 A4.5 4.5 0 0 0 6.5 12.5 H0.5Z" fill="#a8a8a8"/><circle cx="9.5" cy="9" r="3" fill="none" stroke="#c8c8c8" stroke-width="1.3"/></svg>
<div class="t" style="left:21px;top:1084px;color:#d0d0d0">Content Drawer</div>
<svg style="left:114px;top:1082px" width="11" height="13" viewBox="0 0 11 13"><rect x="0.5" y="0.5" width="10" height="12" fill="#c8c8c8"/><path d="M2 3 L5 6 L2 9" fill="none" stroke="#222" stroke-width="1.2"/><rect x="2" y="0" width="1.5" height="2" fill="#222"/><rect x="7" y="0" width="1.5" height="2" fill="#222"/></svg>
<div class="t" style="left:127px;top:1084px;color:#d0d0d0">Output Log</div>
<svg style="left:200px;top:1083px" width="14" height="12" viewBox="0 0 14 12"><rect x="0.6" y="0.6" width="12.8" height="10.8" fill="none" stroke="#c8c8c8" stroke-width="1.2"/><path d="M3 3.5 L6 6 L3 8.5 M6.5 9 H10" fill="none" stroke="#c8c8c8" stroke-width="1.2"/></svg>
<div class="t" style="left:216px;top:1084px;color:#d0d0d0">Cmd</div>
<svg style="left:243px;top:1087px" width="9" height="6" viewBox="0 0 9 6"><path d="M1 1 L4.5 4.5 L8 1" fill="none" stroke="#c8c8c8" stroke-width="1.4"/></svg>
<div class="a" style="left:262px;top:1083px;width:237px;height:16px;background:#0f0f0f;border:1px solid #2c2c2c;border-radius:3px"></div>
<div class="t" style="left:269px;top:1085px;font-family:'Liberation Mono',monospace;font-size:10.2px;color:#505050;letter-spacing:-0.1px">Enter Console Command</div>

</body></html>
